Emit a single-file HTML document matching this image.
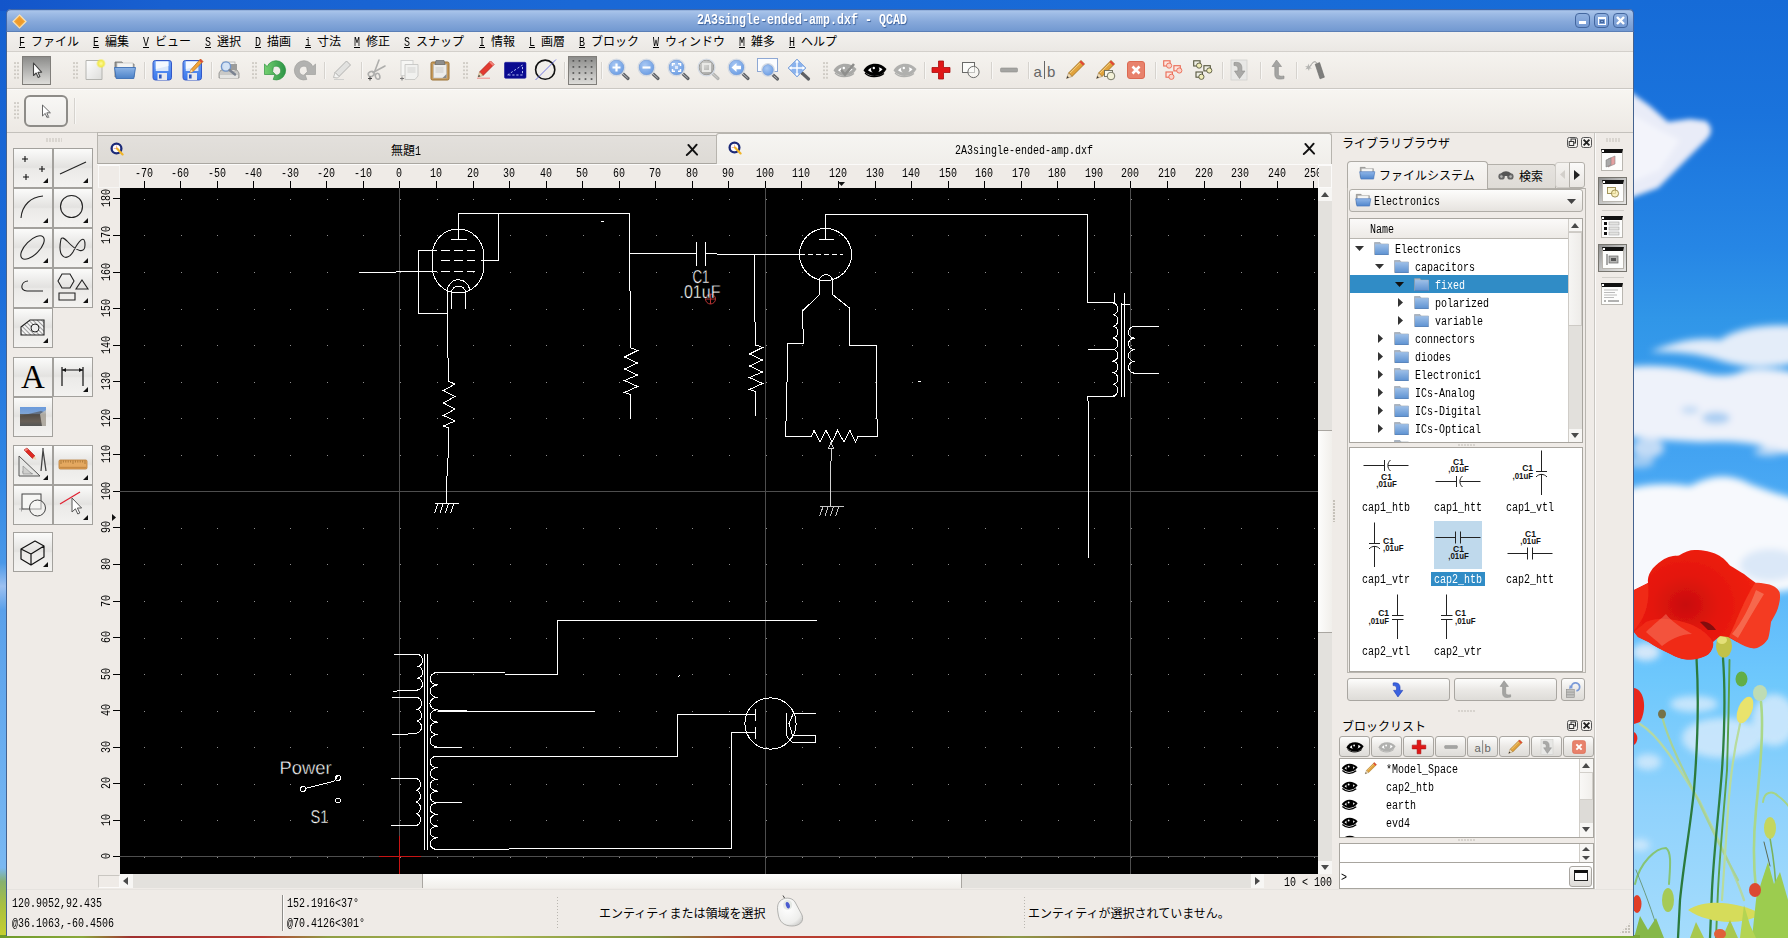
<!DOCTYPE html>
<html lang="ja"><head><meta charset="utf-8"><title>2A3single-ended-amp.dxf - QCAD</title>
<style>
html,body{margin:0;padding:0;}
body{width:1788px;height:938px;overflow:hidden;background:#1f74dc;position:relative;
 font-family:"Liberation Mono","Noto Sans CJK JP",monospace;font-size:12px;color:#000;}
div{position:absolute;box-sizing:border-box;}
svg{position:absolute;overflow:visible;}
.t{white-space:pre;line-height:16px;height:16px;font-size:12px;}
.l{display:inline-block;transform:scaleX(.8333);transform-origin:0 50%;white-space:pre;}
.win{background:#efebe7;}
.tb{background:linear-gradient(#fafafa,#e4e2df 55%,#d6d4d0);border:1px solid #9e9c98;}
.btn{background:linear-gradient(#fdfdfc,#ebe9e6 50%,#dedcd8);border:1px solid #a9a6a1;border-radius:3px;}
.sunk{background:#fff;border:1px solid #a8a59f;}
.sep{background:#cfccc7;width:1px;}
.grip{background-image:radial-gradient(circle at 1px 1px,#c6c2bb 0.55px,transparent 1.1px);background-size:3px 3px;}
.sbt{background:#e4e2de;}
.sbh{background:linear-gradient(#f7f6f4,#eceae6);border:1px solid #c9c6c1;}
u{text-decoration:none;border-bottom:1px solid #000;}
</style></head>
<body>

<svg width="1788" height="938" viewBox="0 0 1788 938" style="left:0;top:0">
<defs>
<linearGradient id="sky" x1="0" y1="0" x2="0" y2="1">
<stop offset="0" stop-color="#166bd7"/><stop offset="0.12" stop-color="#1a73dc"/>
<stop offset="0.264" stop-color="#2686e5"/><stop offset="0.34" stop-color="#3096e8"/><stop offset="0.49" stop-color="#44a4f2"/>
<stop offset="0.6" stop-color="#58b4f7"/><stop offset="0.69" stop-color="#68c2fc"/><stop offset="0.725" stop-color="#6ec8fc"/>
<stop offset="0.86" stop-color="#90d2fc"/><stop offset="1" stop-color="#a4dcfc"/>
</linearGradient>
<linearGradient id="skyL" x1="0" y1="0" x2="0" y2="1">
<stop offset="0" stop-color="#1560d0"/><stop offset="0.3" stop-color="#1b6cd9"/><stop offset="0.5" stop-color="#2f86e4"/>
<stop offset="0.6" stop-color="#4a98e8"/><stop offset="0.625" stop-color="#9cc0f0"/><stop offset="0.65" stop-color="#5aa0ea"/>
<stop offset="0.8" stop-color="#6aaef0"/><stop offset="0.925" stop-color="#7ab8f2"/><stop offset="0.94" stop-color="#86b070"/>
<stop offset="0.965" stop-color="#a8c040"/><stop offset="1" stop-color="#c8d030"/>
</linearGradient>
<linearGradient id="bot" x1="0" y1="0" x2="1" y2="0">
<stop offset="0" stop-color="#6d9a2a"/><stop offset="0.05" stop-color="#8aa83a"/><stop offset="0.08" stop-color="#a03030"/>
<stop offset="0.16" stop-color="#b83a34"/><stop offset="0.2" stop-color="#8f9e44"/><stop offset="0.3" stop-color="#a9b552"/>
<stop offset="0.4" stop-color="#7f9440"/><stop offset="0.45" stop-color="#b14030"/><stop offset="0.55" stop-color="#c03a30"/>
<stop offset="0.62" stop-color="#8c9a48"/><stop offset="0.7" stop-color="#a44a3a"/><stop offset="0.8" stop-color="#b04436"/>
<stop offset="0.88" stop-color="#8aa040"/><stop offset="1" stop-color="#7aa838"/>
</linearGradient>
<filter id="bl6" x="-30%" y="-30%" width="160%" height="160%"><feGaussianBlur stdDeviation="3.5"/></filter>
<filter id="bl3" x="-30%" y="-30%" width="160%" height="160%"><feGaussianBlur stdDeviation="2.5"/></filter>
<filter id="bl1" x="-30%" y="-30%" width="160%" height="160%"><feGaussianBlur stdDeviation="0.7"/></filter>
<radialGradient id="pop" cx="0.42" cy="0.5" r="0.6">
<stop offset="0" stop-color="#c80e0a"/><stop offset="0.45" stop-color="#e4150e"/><stop offset="1" stop-color="#f0210f"/>
</radialGradient>
<linearGradient id="skyT" x1="0" y1="0" x2="1" y2="0"><stop offset="0" stop-color="#1355ca"/><stop offset="0.1" stop-color="#1860d0"/><stop offset="0.35" stop-color="#1a68d6"/><stop offset="1" stop-color="#176cd7"/></linearGradient>
<clipPath id="deskclip"><path d="M0 0 H1788 V938 H0Z"/></clipPath>
</defs>
<rect x="0" y="0" width="1788" height="938" fill="url(#sky)"/>
<rect x="0" y="0" width="8" height="938" fill="url(#skyL)"/>
<rect x="0" y="0" width="1640" height="11" fill="url(#skyT)"/>
<!-- clouds -->
<g filter="url(#bl3)">
<path d="M1625 88 L1650 106 L1668 122 L1690 119 L1706 121 Q1716 130 1706 140 L1694 152 L1678 168 L1658 188 L1625 200Z" fill="#e9ecf8"/>
<path d="M1625 110 L1660 130 L1680 140 L1660 170 L1625 185Z" fill="#f3f4fb"/>
</g>
<g filter="url(#bl6)">
<path d="M1650 352 Q1690 335 1720 340 Q1745 322 1800 326 V362 Q1760 372 1725 362 Q1690 350 1650 352Z" fill="#e4edf9"/>
<path d="M1620 368 Q1660 362 1700 372 Q1725 380 1745 370 Q1770 366 1800 374 V452 Q1772 456 1762 446 Q1740 440 1700 442 Q1660 440 1620 436Z" fill="#eef2fa"/>
<ellipse cx="1716" cy="418" rx="14" ry="6" fill="#a9cdf2"/>
<ellipse cx="1690" cy="410" rx="9" ry="4" fill="#c3daf5"/>
<ellipse cx="1648" cy="448" rx="16" ry="10" fill="#c2dbf6"/>
<path d="M1620 492 Q1650 480 1690 486 Q1722 468 1750 484 Q1775 494 1800 500 V588 Q1760 598 1720 590 Q1670 602 1620 598Z" fill="#f7f9fd"/>
<ellipse cx="1770" cy="565" rx="30" ry="16" fill="#dbe8f8"/>
<ellipse cx="1640" cy="462" rx="14" ry="6" fill="#9fcbf3"/>
<ellipse cx="1768" cy="452" rx="14" ry="4" fill="#b9d8f6"/>
</g>
<g filter="url(#bl6)" fill="#d4eafc" opacity="0.85">
<ellipse cx="1722" cy="738" rx="40" ry="20"/>
<ellipse cx="1694" cy="704" rx="24" ry="8"/>
<ellipse cx="1774" cy="720" rx="22" ry="26"/>
<ellipse cx="1646" cy="652" rx="14" ry="9" fill="#e6eef9"/>
<ellipse cx="1648" cy="762" rx="13" ry="8"/>
<ellipse cx="1640" cy="845" rx="10" ry="6"/>
</g>
<!-- stems -->
<g fill="none" stroke-linecap="round" filter="url(#bl1)">
<path d="M1640 724 C1660 736 1680 770 1700 802 C1716 836 1734 870 1744 900" stroke="#b4d8a4" stroke-width="2.4"/>
<path d="M1662.5 718 C1668 740 1684 772 1698 800 C1712 830 1726 858 1738 880" stroke="#a8d296" stroke-width="2.2"/>
<path d="M1740 724 C1734 750 1730 780 1728 810 C1726 840 1724 870 1722 900" stroke="#b8dc9c" stroke-width="2.2"/>
<path d="M1761 702 C1764 730 1760 770 1756 810 C1752 850 1754 890 1762 925" stroke="#aad88a" stroke-width="2.6"/>
<path d="M1763 802 C1764 792 1772 790 1778 796 C1784 800 1787 804 1790 808" stroke="#a6d486" stroke-width="2"/>
<path d="M1770 838 C1774 860 1776 878 1776 896" stroke="#7ab25a" stroke-width="1.5"/>
<path d="M1696.5 658 C1699 700 1698 740 1694 790 C1690 830 1684 860 1680 900 L1678 938" stroke="#2c7a3c" stroke-width="2.3"/>
<path d="M1723 658 C1726 700 1724 740 1722 770 C1719 810 1714 850 1712 890 L1710 938" stroke="#2f8040" stroke-width="2.3"/>
<path d="M1729.5 660 C1729 700 1728 740 1727 770 C1724 810 1720 850 1718 890 L1716 938" stroke="#58a048" stroke-width="1.9"/>
<path d="M1635 884 C1640 862 1656 848 1666 848 C1672 852 1670 868 1669 884" stroke="#86c474" stroke-width="2"/>
<path d="M1636 870 C1644 890 1652 910 1660 938" stroke="#6a9a80" stroke-width="1"/>
<path d="M1764 842 L1770 866" stroke="#5a6a50" stroke-width="1"/>
</g>
<!-- buds etc -->
<g filter="url(#bl1)">
<ellipse cx="1724" cy="646" rx="8" ry="11.5" fill="#c2c24a"/>
<ellipse cx="1722" cy="640" rx="5" ry="4" fill="#e4e078"/>
<ellipse cx="1741.5" cy="679" rx="6" ry="7.5" fill="#62ae46"/>
<ellipse cx="1745" cy="710" rx="7" ry="14" fill="#e9e36c" transform="rotate(22 1745 710)"/>
<ellipse cx="1760" cy="693" rx="7" ry="8" fill="#bedcb4"/>
<ellipse cx="1662" cy="714" rx="4" ry="4.5" fill="#74724a"/>
<ellipse cx="1770" cy="828" rx="6" ry="11" fill="#c4d65e"/>
<ellipse cx="1668" cy="900" rx="6" ry="12" fill="#a6ca56"/>
<path d="M1688 910 C1706 898 1738 902 1762 914 C1742 926 1708 924 1688 910Z" fill="#d6dc5a"/>
<path d="M1752 938 L1756 900 L1762 880 L1768 862 L1774 884 L1780 872 L1788 900 V938Z" fill="#9ccc50"/>
<path d="M1740 938 L1744 905 L1750 925 L1756 938Z" fill="#b4d452"/>
<path d="M1634 938 L1640 916 L1648 930 L1656 918 L1664 938Z" fill="#86b84a"/>
<path d="M1690 938 L1696 922 L1704 938Z M1722 938 L1730 920 L1738 938Z" fill="#a8c850"/>
<ellipse cx="1755" cy="890" rx="6" ry="7" fill="#dc4a30"/>
<ellipse cx="1637" cy="904" rx="4.5" ry="9" fill="#e03c26"/>
<ellipse cx="1720" cy="934" rx="6" ry="5" fill="#e0603a"/>
<path d="M1634 688 C1645 690 1647 710 1640 722 L1634 724Z" fill="#e8261a"/>
<path d="M1634 732 C1639 735 1638 742 1634 745Z" fill="#e8261a"/>
</g>
<!-- poppy -->
<g filter="url(#bl1)">
<path d="M1634 590 L1648 583 C1647 575 1652 567 1662 560.5 C1668 556 1674 556 1679 555.5 C1684 552 1690 550 1694.5 550 C1704 550 1712 552 1717 554.5 C1724 558 1727 562 1730 565.5 C1736 569 1740 572 1744 574 C1749 578 1752 580 1756 583 L1757 640 L1737 642 L1728 637 L1720 636 L1713 642 C1713 648 1711 652 1708 654.5 C1702 658 1694 660 1688 659.5 C1680 659 1674 656 1670.5 654 C1662 650 1654 646 1648.5 642 L1638 637 L1634 632Z" fill="url(#pop)"/>
<path d="M1755 583 C1760 582 1765 584 1769.5 584.5 C1775 586 1778 589 1779.5 592 C1781 598 1779 604 1778 608 C1776 614 1773 618 1771 622 C1770 630 1769 636 1768 639 C1764 645 1759 648 1754 648.5 C1748 648 1742 645 1737 642 C1734 640 1731 638 1729 637 C1736 622 1744 600 1755 583Z" fill="#f43a20"/>
<path d="M1634 632 L1638 637 L1648.5 642 C1654 646 1662 650 1670.5 654 C1676 657 1682 660 1688 659.5 C1696 659.5 1703 658 1708 654.5 C1712 651 1714 646 1713 642 C1708 634 1700 628 1690 624 C1676 619 1660 616 1646 622 Z" fill="#f02a18"/>
<path d="M1646 632 C1654 624 1662 618 1666 614 C1672 622 1682 628 1692 634 C1680 634 1670 640 1662 646 C1656 640 1650 636 1646 632Z" fill="#f7866c" opacity="0.45"/>
<path d="M1756 590 C1750 606 1742 622 1732 634 L1738 638 C1746 624 1754 610 1764 594Z" fill="#f8957c" opacity="0.5"/>
<path d="M1700 622 C1706 620 1712 624 1716 630 L1708 630Z" fill="#5a0806" opacity="0.7"/>
<path d="M1634 590 L1648 583 C1650 600 1646 616 1636 628 L1634 630Z" fill="#f02a18"/>
</g>
<rect x="0" y="935" width="1640" height="3" fill="url(#bot)"/>
</svg>
<div style="left:6px;top:9px;width:1628px;height:927px;background:#efebe7;border:1px solid #44628f;border-top:none;border-radius:5px 5px 0 0;"></div><div style="left:6px;top:9px;width:1628px;height:23px;background:linear-gradient(#7f9fd0 0,#a9c4ea 1px,#9dbbe5 4px,#86a8da 12px,#7299d1 21px,#5f86c2 22px);border-radius:5px 5px 0 0;border:1px solid #3f66a8;border-bottom:1px solid #5b7fb6;"></div><svg width="15" height="15" viewBox="0 0 16 16" style="left:11.5px;top:13.5px"><path d="M8 1 L15 8 L8 15 L1 8Z" fill="#f3a93c" stroke="#fbe3b5" stroke-width="1.2"/><path d="M8 3.5 L12.5 8 L8 12.5 L3.5 8Z" fill="#ee9a2a"/></svg><div class="t" style="left:697px;top:11px;font-size:14px;line-height:18px;height:18px;font-weight:bold;color:#fff;text-shadow:1px 1px 1px #3a5f9a;"><span class="l" style="margin-right:-42.00px">2A3single-ended-amp.dxf - QCAD</span></div><div style="left:1575px;top:13px;width:15px;height:15px;border:1px solid #44679f;border-radius:4px;background:linear-gradient(#8fb0df,#7499d2);"></div><div style="left:1579px;top:21px;width:7px;height:3px;background:#fff;"></div><div style="left:1594px;top:13px;width:15px;height:15px;border:1px solid #44679f;border-radius:4px;background:linear-gradient(#8fb0df,#7499d2);"></div><div style="left:1598px;top:17px;width:8px;height:8px;border:1px solid #fff;border-top:2px solid #fff;"></div><div style="left:1600px;top:20px;width:4px;height:3px;border:1px solid #44679f;"></div><div style="left:1613px;top:13px;width:15px;height:15px;border:1px solid #44679f;border-radius:4px;background:linear-gradient(#8fb0df,#7499d2);"></div><svg width="9" height="9" viewBox="0 0 9 9" style="left:1616px;top:16px"><path d="M1 1 L8 8 M8 1 L1 8" stroke="#fff" stroke-width="2.4"/></svg><div style="left:7px;top:32px;width:1626px;height:20px;background:linear-gradient(#f3f1ee,#ebe8e4);border-bottom:1px solid #d3d0cb;"></div><div class="t" style="left:19px;top:35px"><span class="l" style="margin-right:-2.4px"><span style="text-decoration:underline">F</span> </span>ファイル</div><div class="t" style="left:93px;top:35px"><span class="l" style="margin-right:-2.4px"><span style="text-decoration:underline">E</span> </span>編集</div><div class="t" style="left:143px;top:35px"><span class="l" style="margin-right:-2.4px"><span style="text-decoration:underline">V</span> </span>ビュー</div><div class="t" style="left:205px;top:35px"><span class="l" style="margin-right:-2.4px"><span style="text-decoration:underline">S</span> </span>選択</div><div class="t" style="left:255px;top:35px"><span class="l" style="margin-right:-2.4px"><span style="text-decoration:underline">D</span> </span>描画</div><div class="t" style="left:305px;top:35px"><span class="l" style="margin-right:-2.4px"><span style="text-decoration:underline">i</span> </span>寸法</div><div class="t" style="left:354px;top:35px"><span class="l" style="margin-right:-2.4px"><span style="text-decoration:underline">M</span> </span>修正</div><div class="t" style="left:404px;top:35px"><span class="l" style="margin-right:-2.4px"><span style="text-decoration:underline">S</span> </span>スナップ</div><div class="t" style="left:479px;top:35px"><span class="l" style="margin-right:-2.4px"><span style="text-decoration:underline">I</span> </span>情報</div><div class="t" style="left:529px;top:35px"><span class="l" style="margin-right:-2.4px"><span style="text-decoration:underline">L</span> </span>画層</div><div class="t" style="left:579px;top:35px"><span class="l" style="margin-right:-2.4px"><span style="text-decoration:underline">B</span> </span>ブロック</div><div class="t" style="left:653px;top:35px"><span class="l" style="margin-right:-2.4px"><span style="text-decoration:underline">W</span> </span>ウィンドウ</div><div class="t" style="left:739px;top:35px"><span class="l" style="margin-right:-2.4px"><span style="text-decoration:underline">M</span> </span>雑多</div><div class="t" style="left:789px;top:35px"><span class="l" style="margin-right:-2.4px"><span style="text-decoration:underline">H</span> </span>ヘルプ</div><div style="left:7px;top:52px;width:1626px;height:37px;background:linear-gradient(#f5f3ef,#ece8e3);border-bottom:1px solid #cbc8c3;"></div><div style="left:7px;top:89px;width:1626px;height:44px;background:linear-gradient(#f7f5f1,#ede9e4);border-top:1px solid #fbfaf9;border-bottom:1px solid #c4c1bc;"></div><div class="grip" style="left:14px;top:62px;width:5px;height:17px;background-size:3px 3.7px;"></div><div class="grip" style="left:73px;top:62px;width:5px;height:17px;background-size:3px 3.7px;"></div><div class="grip" style="left:252px;top:62px;width:5px;height:17px;background-size:3px 3.7px;"></div><div class="grip" style="left:463px;top:62px;width:5px;height:17px;background-size:3px 3.7px;"></div><div class="grip" style="left:823px;top:62px;width:5px;height:17px;background-size:3px 3.7px;"></div><div class="grip" style="left:14px;top:101.5px;width:5px;height:18px;background-size:3px 3.7px;"></div><div style="left:144px;top:62px;width:1px;height:17px;background:#d6d3ce;"></div><div style="left:145px;top:62px;width:1px;height:17px;background:#f8f7f5;"></div><div style="left:211px;top:62px;width:1px;height:17px;background:#d6d3ce;"></div><div style="left:212px;top:62px;width:1px;height:17px;background:#f8f7f5;"></div><div style="left:324px;top:62px;width:1px;height:17px;background:#d6d3ce;"></div><div style="left:325px;top:62px;width:1px;height:17px;background:#f8f7f5;"></div><div style="left:361px;top:62px;width:1px;height:17px;background:#d6d3ce;"></div><div style="left:362px;top:62px;width:1px;height:17px;background:#f8f7f5;"></div><div style="left:564px;top:62px;width:1px;height:17px;background:#d6d3ce;"></div><div style="left:565px;top:62px;width:1px;height:17px;background:#f8f7f5;"></div><div style="left:601px;top:62px;width:1px;height:17px;background:#d6d3ce;"></div><div style="left:602px;top:62px;width:1px;height:17px;background:#f8f7f5;"></div><div style="left:924px;top:62px;width:1px;height:17px;background:#d6d3ce;"></div><div style="left:925px;top:62px;width:1px;height:17px;background:#f8f7f5;"></div><div style="left:991px;top:62px;width:1px;height:17px;background:#d6d3ce;"></div><div style="left:992px;top:62px;width:1px;height:17px;background:#f8f7f5;"></div><div style="left:1028px;top:62px;width:1px;height:17px;background:#d6d3ce;"></div><div style="left:1029px;top:62px;width:1px;height:17px;background:#f8f7f5;"></div><div style="left:1155px;top:62px;width:1px;height:17px;background:#d6d3ce;"></div><div style="left:1156px;top:62px;width:1px;height:17px;background:#f8f7f5;"></div><div style="left:1222px;top:62px;width:1px;height:17px;background:#d6d3ce;"></div><div style="left:1223px;top:62px;width:1px;height:17px;background:#f8f7f5;"></div><div style="left:1260px;top:62px;width:1px;height:17px;background:#d6d3ce;"></div><div style="left:1261px;top:62px;width:1px;height:17px;background:#f8f7f5;"></div><div style="left:1296px;top:62px;width:1px;height:17px;background:#d6d3ce;"></div><div style="left:1297px;top:62px;width:1px;height:17px;background:#f8f7f5;"></div><div style="left:74px;top:98px;width:1px;height:26px;background:#d6d3ce;"></div><div style="left:75px;top:98px;width:1px;height:26px;background:#f8f7f5;"></div><div style="left:22px;top:56px;width:29px;height:29px;background:linear-gradient(#8c8c8a,#b0b0ae 45%,#dddcd9);border:1px solid #807e7a;"></div><div style="left:568px;top:56px;width:29px;height:29px;background:linear-gradient(#8c8c8a,#b0b0ae 45%,#dddcd9);border:1px solid #807e7a;"></div><div style="left:24px;top:95px;width:44px;height:32px;background:linear-gradient(#f8f7f5,#efedea);border:2px solid #8e8c88;border-radius:6px;"></div><svg width="24" height="24" viewBox="0 0 24 24" style="left:34px;top:99px;"><path d="M8.5 6 L8.5 17 L11.2 14.4 L13 18.6 L14.6 17.9 L12.8 13.8 L16.4 13.8 Z" fill="#fff" stroke="#666" stroke-width="1" stroke-linejoin="round"/><rect x="13.2" y="17" width="2" height="2" fill="#999" transform="rotate(-25 14 18)"/></svg><svg width="24" height="24" viewBox="0 0 24 24" style="left:24.5px;top:58px;"><path d="M8.5 5 L8.5 17.5 L11.2 15 L13.2 19.4 L14.9 18.6 L13 14.4 L16.6 14.2 Z" fill="#fff" stroke="#444" stroke-width="1.1" stroke-linejoin="round"/></svg><svg width="24" height="24" viewBox="0 0 24 24" style="left:83px;top:58px;"><defs><linearGradient id="gnew" x1="0" y1="0" x2="1" y2="1"><stop offset="0" stop-color="#ffffff"/><stop offset="1" stop-color="#dcdcda"/></linearGradient><radialGradient id="gsun"><stop offset="0" stop-color="#fff9a0"/><stop offset="0.6" stop-color="#f2ea4c"/><stop offset="1" stop-color="#f2ea4c" stop-opacity="0"/></radialGradient></defs><path d="M3 2.5 H19 V21.5 H3Z" fill="url(#gnew)" stroke="#b4b4b0" stroke-width="1"/><circle cx="18" cy="5.5" r="5" fill="url(#gsun)"/></svg><svg width="24" height="24" viewBox="0 0 24 24" style="left:112.5px;top:58px;"><defs><linearGradient id="gfol" x1="0" y1="0" x2="0" y2="1"><stop offset="0" stop-color="#8db4e6"/><stop offset="1" stop-color="#4c82c8"/></linearGradient></defs><path d="M2 4 H9 L10.5 6 H21 V19 H2Z" fill="#9a9a98" stroke="#6e6e6c" stroke-width="0.8"/><path d="M4 5 H20 V14 H4Z" fill="#f4f4f2" stroke="#bdbdbb" stroke-width="0.6"/><path d="M1.5 9.5 H22.5 L20.8 20.5 H3.2Z" fill="url(#gfol)" stroke="#3d6fb4" stroke-width="0.9" stroke-linejoin="round"/></svg><svg width="24" height="24" viewBox="0 0 24 24" style="left:149.5px;top:58px;"><defs><linearGradient id="gflo" x1="0" y1="0" x2="0" y2="1"><stop offset="0" stop-color="#6a9ef4"/><stop offset="1" stop-color="#3a78ec"/></linearGradient></defs><rect x="3" y="2.5" width="18.5" height="19.5" rx="2.4" fill="url(#gflo)" stroke="#3458c8" stroke-width="1"/><rect x="5.8" y="3.5" width="12.6" height="9.5" fill="#dbe8fb"/><path d="M5.8 3.5 H18.4 V8 L5.8 11Z" fill="#f4f8fe"/><rect x="7.5" y="15" width="9.5" height="7" fill="#e6e8ee"/><rect x="9" y="16.5" width="2.6" height="4" fill="#2e58c0"/></svg><svg width="24" height="24" viewBox="0 0 24 24" style="left:180px;top:58px;"><defs><linearGradient id="gflo2" x1="0" y1="0" x2="0" y2="1"><stop offset="0" stop-color="#6a9ef4"/><stop offset="1" stop-color="#3a78ec"/></linearGradient></defs><rect x="3" y="2.5" width="18.5" height="19.5" rx="2.4" fill="url(#gflo2)" stroke="#3458c8" stroke-width="1"/><rect x="5.8" y="3.5" width="12.6" height="9.5" fill="#dbe8fb"/><path d="M5.8 3.5 H18.4 V8 L5.8 11Z" fill="#f4f8fe"/><rect x="7.5" y="15" width="9.5" height="7" fill="#e6e8ee"/><rect x="9" y="16.5" width="2.6" height="4" fill="#2e58c0"/><path d="M20.5 1 L23 3.5 L13 13.5 L10 14.5 L11 11.5Z" fill="#f0a438" stroke="#b86a10" stroke-width="0.7"/><path d="M20.5 1 L23 3.5 L21.6 4.9 L19.1 2.4Z" fill="#d84a3a"/><path d="M10 14.5 L11 11.5 L13 13.5Z" fill="#f6deb0"/></svg><svg width="24" height="24" viewBox="0 0 24 24" style="left:217px;top:58px;"><path d="M4 12 H20 L22 15 V20 H2 V15Z" fill="#c9c9c7" stroke="#8e8e8c" stroke-width="0.8"/><rect x="6" y="4" width="12" height="9" fill="#f2f2f0" stroke="#a9a9a7" stroke-width="0.7"/><rect x="3" y="17" width="18" height="3" fill="#e4e4e2"/><rect x="13" y="6" width="7" height="6" fill="#9c9c9a"/><circle cx="9" cy="8.5" r="4.6" fill="#cfe0f6" fill-opacity="0.85" stroke="#6f95cc" stroke-width="1.4"/><path d="M12.5 12 L18 16.5" stroke="#7a8290" stroke-width="2.4" stroke-linecap="round"/></svg><svg width="24" height="24" viewBox="0 0 24 24" style="left:262.5px;top:58px;"><defs><linearGradient id="gun" x1="0" y1="0" x2="1" y2="0"><stop offset="0" stop-color="#74d070"/><stop offset="1" stop-color="#2c9446"/></linearGradient></defs><path d="M1.5 6 L4.2 8.6 A9.6 9.6 0 1 1 10.2 21.5 L11.8 17 A4.5 4.5 0 1 0 10.3 9.3 L9.6 13.7 L12.5 16.5 L1.5 16.5Z" fill="url(#gun)" stroke="#2f9440" stroke-width="0.7" stroke-linejoin="round"/></svg><svg width="24" height="24" viewBox="0 0 24 24" style="left:293px;top:58px;"><g transform="translate(24,0) scale(-1,1)"><path d="M1.5 6 L4.2 8.6 A9.6 9.6 0 1 1 10.2 21.5 L11.8 17 A4.5 4.5 0 1 0 10.3 9.3 L9.6 13.7 L12.5 16.5 L1.5 16.5Z" fill="#b2b2b0" stroke="#a0a09e" stroke-width="0.7" stroke-linejoin="round"/></g></svg><svg width="24" height="24" viewBox="0 0 24 24" style="left:330px;top:58px;"><path d="M16.5 3 L20.5 7 L9 18.5 L5 14.5Z" fill="#e2e2e0" stroke="#b2b2b0" stroke-width="1"/><path d="M5 14.5 L9 18.5 L7.5 20 L3.5 19.5Z" fill="#f4f4f2" stroke="#b2b2b0" stroke-width="0.8"/><path d="M4 21.5 H14" stroke="#d0d0ce" stroke-width="1"/></svg><svg width="24" height="24" viewBox="0 0 24 24" style="left:365px;top:58px;"><g fill="none" stroke="#aeaeac" stroke-width="1.6" stroke-linecap="round"><path d="M14 2 L9.5 14"/><path d="M20 8 L8 14.5"/><ellipse cx="6.2" cy="16" rx="3" ry="2.4" transform="rotate(-25 6.2 16)"/><ellipse cx="12.6" cy="18.3" rx="2.2" ry="3" transform="rotate(-15 12.6 18.3)"/></g><path d="M3 20.5 H7 M5 18.5 V22.5" stroke="#444" stroke-width="1"/></svg><svg width="24" height="24" viewBox="0 0 24 24" style="left:397px;top:58px;"><rect x="4" y="2.5" width="12" height="15" fill="#f6f6f4" stroke="#cfcfcd" stroke-width="0.9"/><path d="M8 6.5 H21 V18 L18 21.5 H8Z" fill="#f1f1ef" stroke="#c6c6c4" stroke-width="0.9"/><rect x="10.5" y="9" width="8" height="6" fill="#e2e2e0"/><path d="M3 20.5 H7 M5 18.5 V22.5" stroke="#777" stroke-width="1"/></svg><svg width="24" height="24" viewBox="0 0 24 24" style="left:427.5px;top:58px;"><rect x="3" y="4" width="18" height="18" rx="1.5" fill="#c69a5a" stroke="#9a7236" stroke-width="1"/><rect x="5.5" y="6.5" width="13" height="13.5" fill="#ececea" stroke="#b9b9b7" stroke-width="0.6"/><path d="M8 2.5 H16 L17 6.5 H7Z" fill="#8e8e8c" stroke="#6a6a68" stroke-width="0.7"/><path d="M18.5 16 V20 H14.5Z" fill="#8a8a88"/><rect x="7.5" y="9" width="8" height="6" fill="#dcdcda"/></svg><svg width="24" height="24" viewBox="0 0 24 24" style="left:473px;top:58px;"><path d="M17.5 3 L21 6.5 L10 17.5 L6.5 14Z" fill="#e23a30" stroke="#b0201a" stroke-width="0.8"/><path d="M6.5 14 L10 17.5 L5 19Z" fill="#f2d9b4" stroke="#a88a5a" stroke-width="0.5"/><path d="M5 19 L6 16.8 L7.3 18.2Z" fill="#333"/><path d="M17.5 3 L21 6.5 L19.7 7.8 L16.2 4.3Z" fill="#f48a80"/><path d="M4 20.2 H17" stroke="#f08a84" stroke-width="1"/></svg><svg width="24" height="24" viewBox="0 0 24 24" style="left:502.5px;top:58px;"><rect x="1.5" y="4.3" width="21.5" height="16" rx="1.2" fill="#0a0a90" stroke="#1a1a9a" stroke-width="0.6"/><path d="M4.5 17 L19.5 7 V17 Z" fill="none" stroke="#b4c0f4" stroke-width="1" stroke-dasharray="2.2 1.8"/></svg><svg width="24" height="24" viewBox="0 0 24 24" style="left:533px;top:58px;"><circle cx="12.2" cy="11.7" r="9.6" fill="none" stroke="#111" stroke-width="1.6"/><path d="M2.5 22 L23 1.5" stroke="#5058dc" stroke-width="0.8"/></svg><svg width="24" height="24" viewBox="0 0 24 24" style="left:570.5px;top:58px;"><rect x="1.5" y="2" width="1.7" height="1.7" fill="#555"/><rect x="1.5" y="8.07" width="1.7" height="1.7" fill="#555"/><rect x="1.5" y="14.14" width="1.7" height="1.7" fill="#555"/><rect x="1.5" y="20.21" width="1.7" height="1.7" fill="#555"/><rect x="7.57" y="2" width="1.7" height="1.7" fill="#555"/><rect x="7.57" y="8.07" width="1.7" height="1.7" fill="#555"/><rect x="7.57" y="14.14" width="1.7" height="1.7" fill="#555"/><rect x="7.57" y="20.21" width="1.7" height="1.7" fill="#555"/><rect x="13.64" y="2" width="1.7" height="1.7" fill="#555"/><rect x="13.64" y="8.07" width="1.7" height="1.7" fill="#555"/><rect x="13.64" y="14.14" width="1.7" height="1.7" fill="#555"/><rect x="13.64" y="20.21" width="1.7" height="1.7" fill="#555"/><rect x="19.71" y="2" width="1.7" height="1.7" fill="#555"/><rect x="19.71" y="8.07" width="1.7" height="1.7" fill="#555"/><rect x="19.71" y="14.14" width="1.7" height="1.7" fill="#555"/><rect x="19.71" y="20.21" width="1.7" height="1.7" fill="#555"/></svg><svg width="24" height="24" viewBox="0 0 24 24" style="left:607px;top:58px;"><defs><radialGradient id="gz53526" cx="0.4" cy="0.35" r="0.75"><stop offset="0" stop-color="#a9c8f3"/><stop offset="1" stop-color="#6498e2"/></radialGradient></defs><path d="M14.5 14.5 L21 20.5" stroke="#5e6064" stroke-width="3.2" stroke-linecap="round"/><path d="M16 16 L20.5 20" stroke="#b8bcc2" stroke-width="1" stroke-linecap="round"/><circle cx="9.5" cy="9.5" r="7.6" fill="url(#gz53526)" stroke="#7fa2d8" stroke-width="1"/><circle cx="9.5" cy="9.5" r="8.4" fill="none" stroke="#d5dbe4" stroke-width="1.3"/><path d="M5.5 9.5 H13.5 M9.5 5.5 V13.5" stroke="#fff" stroke-width="2.2"/></svg><svg width="24" height="24" viewBox="0 0 24 24" style="left:637px;top:58px;"><defs><radialGradient id="gz47447" cx="0.4" cy="0.35" r="0.75"><stop offset="0" stop-color="#a9c8f3"/><stop offset="1" stop-color="#6498e2"/></radialGradient></defs><path d="M14.5 14.5 L21 20.5" stroke="#5e6064" stroke-width="3.2" stroke-linecap="round"/><path d="M16 16 L20.5 20" stroke="#b8bcc2" stroke-width="1" stroke-linecap="round"/><circle cx="9.5" cy="9.5" r="7.6" fill="url(#gz47447)" stroke="#7fa2d8" stroke-width="1"/><circle cx="9.5" cy="9.5" r="8.4" fill="none" stroke="#d5dbe4" stroke-width="1.3"/><path d="M5.5 9.5 H13.5" stroke="#fff" stroke-width="2.2"/></svg><svg width="24" height="24" viewBox="0 0 24 24" style="left:667px;top:58px;"><defs><radialGradient id="gz53570" cx="0.4" cy="0.35" r="0.75"><stop offset="0" stop-color="#a9c8f3"/><stop offset="1" stop-color="#6498e2"/></radialGradient></defs><path d="M14.5 14.5 L21 20.5" stroke="#5e6064" stroke-width="3.2" stroke-linecap="round"/><path d="M16 16 L20.5 20" stroke="#b8bcc2" stroke-width="1" stroke-linecap="round"/><circle cx="9.5" cy="9.5" r="7.6" fill="url(#gz53570)" stroke="#7fa2d8" stroke-width="1"/><circle cx="9.5" cy="9.5" r="8.4" fill="none" stroke="#d5dbe4" stroke-width="1.3"/><path d="M5.5 8 V5.8 H8 M11 5.8 H13.5 V8 M13.5 11 V13.2 H11 M8 13.2 H5.5 V11" stroke="#fff" stroke-width="1.5" fill="none"/><rect x="8" y="8" width="3" height="3" fill="#dce8fa"/></svg><svg width="24" height="24" viewBox="0 0 24 24" style="left:697px;top:58px;"><defs><radialGradient id="gz81569g" cx="0.4" cy="0.35" r="0.75"><stop offset="0" stop-color="#d4d4d2"/><stop offset="1" stop-color="#a2a2a0"/></radialGradient></defs><path d="M14.5 14.5 L21 20.5" stroke="#b4b4b2" stroke-width="3.2" stroke-linecap="round"/><path d="M16 16 L20.5 20" stroke="#d0d0ce" stroke-width="1" stroke-linecap="round"/><circle cx="9.5" cy="9.5" r="7.6" fill="url(#gz81569g)" stroke="#8e8e8c" stroke-width="1"/><circle cx="9.5" cy="9.5" r="8.4" fill="none" stroke="#d5dbe4" stroke-width="1.3"/><rect x="6" y="6" width="7" height="7" fill="none" stroke="#e8e8e6" stroke-width="2"/></svg><svg width="24" height="24" viewBox="0 0 24 24" style="left:727px;top:58px;"><defs><radialGradient id="gz6534" cx="0.4" cy="0.35" r="0.75"><stop offset="0" stop-color="#a9c8f3"/><stop offset="1" stop-color="#6498e2"/></radialGradient></defs><path d="M14.5 14.5 L21 20.5" stroke="#5e6064" stroke-width="3.2" stroke-linecap="round"/><path d="M16 16 L20.5 20" stroke="#b8bcc2" stroke-width="1" stroke-linecap="round"/><circle cx="9.5" cy="9.5" r="7.6" fill="url(#gz6534)" stroke="#7fa2d8" stroke-width="1"/><circle cx="9.5" cy="9.5" r="8.4" fill="none" stroke="#d5dbe4" stroke-width="1.3"/><path d="M4.5 9.5 L9.5 5 V7.8 H14 V11.2 H9.5 V14 Z" fill="#fff"/></svg><svg width="24" height="24" viewBox="0 0 24 24" style="left:756px;top:58px;"><rect x="1.5" y="0.5" width="20" height="13" fill="#fbfcfe" stroke="#8ea8d4" stroke-width="1"/><defs><radialGradient id="gz0" cx="0.4" cy="0.35" r="0.75"><stop offset="0" stop-color="#a9c8f3"/><stop offset="1" stop-color="#6498e2"/></radialGradient></defs><path d="M16.5 16.5 L21.5 21" stroke="#5e6064" stroke-width="3.2" stroke-linecap="round"/><path d="M18 18 L21 20.6" stroke="#b8bcc2" stroke-width="1" stroke-linecap="round"/><circle cx="12" cy="12" r="5.6" fill="url(#gz0)" stroke="#7fa2d8" stroke-width="1"/><circle cx="12" cy="12" r="6.3" fill="none" stroke="#d5dbe4" stroke-width="1.3"/></svg><svg width="24" height="24" viewBox="0 0 24 24" style="left:787px;top:58px;"><path d="M15 15 L21.5 21" stroke="#5e6064" stroke-width="3.2" stroke-linecap="round"/><path d="M10 1 L19 10 L10 19 L1 10Z" fill="#8ab2ec" stroke="#7a9ed8" stroke-width="0.8"/><path d="M10 3 V17 M3 10 H17" stroke="#fff" stroke-width="1.4"/><path d="M10 1.8 L12 4.6 H8Z M10 18.2 L12 15.4 H8Z M1.8 10 L4.6 8 V12Z M18.2 10 L15.4 8 V12Z" fill="#fff"/></svg><svg width="24" height="24" viewBox="0 0 24 24" style="left:833px;top:58px;"><path d="M0.5 12.5 C4 4.5 17 3 23.5 11 C19.5 19.5 6.5 20.5 0.5 12.5Z" fill="#a9a9a7"/><path d="M5 12.2 C8 8.6 15.5 8 19.5 11.2 C16.5 15.2 8.5 15.6 5 12.2Z" fill="#fff"/><circle cx="12.2" cy="11.4" r="4.2" fill="#a9a9a7"/><circle cx="10.8" cy="10" r="1.2" fill="#fff"/><path d="M2 15 C6 19.5 15 20 21 15.5" stroke="#a9a9a7" stroke-width="1.2" fill="none"/><path d="M8 12 L12 16.5 L21 6" stroke="#8e8e8c" stroke-width="2.6" fill="none"/></svg><svg width="24" height="24" viewBox="0 0 24 24" style="left:863px;top:58px;"><path d="M0.5 12.5 C4 4.5 17 3 23.5 11 C19.5 19.5 6.5 20.5 0.5 12.5Z" fill="#000"/><path d="M5 12.2 C8 8.6 15.5 8 19.5 11.2 C16.5 15.2 8.5 15.6 5 12.2Z" fill="#fff"/><circle cx="12.2" cy="11.4" r="4.2" fill="#000"/><circle cx="10.8" cy="10" r="1.2" fill="#fff"/><path d="M2 15 C6 19.5 15 20 21 15.5" stroke="#000" stroke-width="1.2" fill="none"/></svg><svg width="24" height="24" viewBox="0 0 24 24" style="left:893px;top:58px;"><path d="M0.5 12.5 C4 4.5 17 3 23.5 11 C19.5 19.5 6.5 20.5 0.5 12.5Z" fill="#b0b0ae"/><path d="M5 12.2 C8 8.6 15.5 8 19.5 11.2 C16.5 15.2 8.5 15.6 5 12.2Z" fill="#fff"/><circle cx="12.2" cy="11.4" r="4.2" fill="#b0b0ae"/><circle cx="10.8" cy="10" r="1.2" fill="#fff"/><path d="M2 15 C6 19.5 15 20 21 15.5" stroke="#b0b0ae" stroke-width="1.2" fill="none"/></svg><svg width="24" height="24" viewBox="0 0 24 24" style="left:929px;top:58px;"><path d="M9.5 3 H14.5 V9.5 H21 V14.5 H14.5 V21 H9.5 V14.5 H3 V9.5 H9.5Z" fill="#e01818" stroke="#a80c0c" stroke-width="0.8"/></svg><svg width="24" height="24" viewBox="0 0 24 24" style="left:959px;top:58px;"><rect x="3.5" y="4.5" width="12" height="10" fill="#fbfbf9" stroke="#6a6a68" stroke-width="1"/><circle cx="14.5" cy="14" r="5.6" fill="#fbfbf9" fill-opacity="0.6" stroke="#6a6a68" stroke-width="1"/></svg><svg width="24" height="24" viewBox="0 0 24 24" style="left:997px;top:58px;"><rect x="3.5" y="10" width="17" height="4" rx="1" fill="#a4a4a2" stroke="#8e8e8c" stroke-width="0.6"/></svg><svg width="24" height="24" viewBox="0 0 24 24" style="left:1033px;top:58px;"><text x="0.5" y="18.5" font-family="Liberation Sans,sans-serif" font-size="15" fill="#666">a</text><path d="M11.5 3 V21" stroke="#666" stroke-width="1"/><text x="14" y="18.5" font-family="Liberation Sans,sans-serif" font-size="15" fill="#666">b</text></svg><svg width="24" height="24" viewBox="0 0 24 24" style="left:1063px;top:58px;"><path d="M18 2.5 L21.5 6 L9 18.5 L5.5 15Z" fill="#e0a23c" stroke="#9a6a1a" stroke-width="0.8"/><path d="M18 2.5 L21.5 6 L20 7.5 L16.5 4Z" fill="#e2463a"/><path d="M5.5 15 L9 18.5 L3.5 20.5Z" fill="#f2deb8" stroke="#9a7a4a" stroke-width="0.5"/><path d="M3.5 20.5 L4.4 18 L6 19.6Z" fill="#333"/><path d="M17 5.2 L7.2 15" stroke="#f6d48a" stroke-width="1"/></svg><svg width="24" height="24" viewBox="0 0 24 24" style="left:1093px;top:58px;"><path d="M18 2.5 L21.5 6 L9 18.5 L5.5 15Z" fill="#e0a23c" stroke="#9a6a1a" stroke-width="0.8"/><path d="M18 2.5 L21.5 6 L20 7.5 L16.5 4Z" fill="#e2463a"/><path d="M5.5 15 L9 18.5 L3.5 20.5Z" fill="#f2deb8" stroke="#9a7a4a" stroke-width="0.5"/><path d="M3.5 20.5 L4.4 18 L6 19.6Z" fill="#333"/><path d="M17 5.2 L7.2 15" stroke="#f6d48a" stroke-width="1"/><rect x="11.5" y="12.5" width="8" height="6" fill="#f7f7f0" stroke="#6a6a58" stroke-width="0.9"/><circle cx="18" cy="18" r="3.8" fill="#f4f2d8" stroke="#6a6a58" stroke-width="0.9"/></svg><svg width="24" height="24" viewBox="0 0 24 24" style="left:1123.5px;top:58px;"><rect x="3.5" y="3.5" width="17" height="17" rx="2.5" fill="#e8826c" stroke="#dc6a52" stroke-width="1"/><path d="M8.5 8.5 L15.5 15.5 M15.5 8.5 L8.5 15.5" stroke="#fff" stroke-width="2.6"/></svg><svg width="24" height="24" viewBox="0 0 24 24" style="left:1160px;top:58px;"><rect x="3.7" y="2.8" width="6.4" height="5.2" fill="#fde6e0" stroke="#ea6a54" stroke-width="1.1"/><circle cx="9.1" cy="7.6" r="2.6" fill="#fbd2c8" stroke="#ea6a54" stroke-width="0.9"/><rect x="13.9" y="7.7" width="6.4" height="5.2" fill="#fde6e0" stroke="#ea6a54" stroke-width="1.1"/><circle cx="19.3" cy="12.5" r="2.6" fill="#fbd2c8" stroke="#ea6a54" stroke-width="0.9"/><rect x="6" y="14" width="6.4" height="5.2" fill="#fde6e0" stroke="#ea6a54" stroke-width="1.1"/><circle cx="11.4" cy="18.8" r="2.6" fill="#fbd2c8" stroke="#ea6a54" stroke-width="0.9"/></svg><svg width="24" height="24" viewBox="0 0 24 24" style="left:1190px;top:58px;"><rect x="3.7" y="2.8" width="6.4" height="5.2" fill="#eeeee4" stroke="#56563e" stroke-width="1.1"/><circle cx="9.1" cy="7.6" r="2.6" fill="#f0edb8" stroke="#56563e" stroke-width="0.9"/><rect x="13.9" y="7.7" width="6.4" height="5.2" fill="#eeeee4" stroke="#56563e" stroke-width="1.1"/><circle cx="19.3" cy="12.5" r="2.6" fill="#f0edb8" stroke="#56563e" stroke-width="0.9"/><rect x="6" y="14" width="6.4" height="5.2" fill="#eeeee4" stroke="#56563e" stroke-width="1.1"/><circle cx="11.4" cy="18.8" r="2.6" fill="#f0edb8" stroke="#56563e" stroke-width="0.9"/></svg><svg width="24" height="24" viewBox="0 0 24 24" style="left:1227px;top:58px;"><rect x="4" y="2" width="16" height="20" fill="#e8e8e6" stroke="#d0d0ce" stroke-width="0.8"/><path d="M7 4.5 C14 3.5 15.5 7 14.8 13 H18 L12.5 20.5 L7.5 13 H10.8 C11.3 9 10.5 7.5 7 7.5Z" fill="#a9a9a7" stroke="#8e8e8c" stroke-width="0.6"/></svg><svg width="24" height="24" viewBox="0 0 24 24" style="left:1265px;top:58px;"><path d="M7 8.5 L11.5 2 L16.5 8.5 H13.4 V16 C13.4 18 15 18.6 19 18 V20.6 C12.5 22 9.8 20.5 9.8 16 V8.5Z" fill="#a4a4a2" stroke="#8a8a88" stroke-width="0.6"/></svg><svg width="24" height="24" viewBox="0 0 24 24" style="left:1302px;top:58px;"><path d="M13.2 6.2 L17.6 4.6 L22.4 19.2 L18 20.8Z" fill="#7e7e7c" stroke="#6a6a68" stroke-width="0.6" stroke-linejoin="round"/><path d="M15 5.5 C13.5 2.5 10.5 3.5 8.5 8" stroke="#8e8e8c" stroke-width="0.9" fill="none"/><path d="M6.3 5.6 L7.2 8 L9.6 7.2 L8 9.2 L10 10.6 L7.5 10.6 L7 13 L5.8 10.8 L3.4 11.6 L5 9.6 L3 8.2 L5.6 8.2Z" fill="#b4b4b2"/></svg><div style="left:46px;top:138px;width:16px;height:4px;background-image:radial-gradient(circle at 1px 1px,#d2cec8 0.6px,transparent 1px);background-size:3px 2px;"></div><div style="left:13px;top:148px;width:40px;height:40px;background:linear-gradient(#fbfbfa,#e3e2e0 48%,#ebeae8 52%,#f3f2f0);border:1px solid #a3a19d;"></div><svg width="40" height="40" viewBox="0 0 40 40" style="left:13px;top:148px"><path d="M12 8 V14 M9 11 H15 M29 18 V24 M26 21 H32 M13 26 V32 M10 29 H16" stroke="#111" stroke-width="1.1"/><path d="M35 30 V35 H30Z" fill="#111"/></svg><div style="left:53px;top:148px;width:40px;height:40px;background:linear-gradient(#fbfbfa,#e3e2e0 48%,#ebeae8 52%,#f3f2f0);border:1px solid #a3a19d;"></div><svg width="40" height="40" viewBox="0 0 40 40" style="left:53px;top:148px"><path d="M7 26 L33 14" stroke="#222" stroke-width="1.1" fill="none"/><path d="M35 30 V35 H30Z" fill="#111"/></svg><div style="left:13px;top:188px;width:40px;height:40px;background:linear-gradient(#fbfbfa,#e3e2e0 48%,#ebeae8 52%,#f3f2f0);border:1px solid #a3a19d;"></div><svg width="40" height="40" viewBox="0 0 40 40" style="left:13px;top:188px"><path d="M8 30 C9 17 18 9 30 8" stroke="#222" stroke-width="1.1" fill="none"/><path d="M35 30 V35 H30Z" fill="#111"/></svg><div style="left:53px;top:188px;width:40px;height:40px;background:linear-gradient(#fbfbfa,#e3e2e0 48%,#ebeae8 52%,#f3f2f0);border:1px solid #a3a19d;"></div><svg width="40" height="40" viewBox="0 0 40 40" style="left:53px;top:188px"><circle cx="18.5" cy="18.5" r="11" stroke="#222" stroke-width="1.1" fill="none"/><path d="M35 30 V35 H30Z" fill="#111"/></svg><div style="left:13px;top:228px;width:40px;height:40px;background:linear-gradient(#fbfbfa,#e3e2e0 48%,#ebeae8 52%,#f3f2f0);border:1px solid #a3a19d;"></div><svg width="40" height="40" viewBox="0 0 40 40" style="left:13px;top:228px"><ellipse cx="19.5" cy="19.5" rx="15" ry="7" transform="rotate(-45 19.5 19.5)" stroke="#222" stroke-width="1.1" fill="none"/><path d="M35 30 V35 H30Z" fill="#111"/></svg><div style="left:53px;top:228px;width:40px;height:40px;background:linear-gradient(#fbfbfa,#e3e2e0 48%,#ebeae8 52%,#f3f2f0);border:1px solid #a3a19d;"></div><svg width="40" height="40" viewBox="0 0 40 40" style="left:53px;top:228px"><path d="M8 11 C4 30 14 34 20 24 C26 12 32 6 32 17 C32 26 24 24 14 13 C11 10 9 9 8 11Z" stroke="#222" stroke-width="1.1" fill="none"/><path d="M35 30 V35 H30Z" fill="#111"/></svg><div style="left:13px;top:268px;width:40px;height:40px;background:linear-gradient(#fbfbfa,#e3e2e0 48%,#ebeae8 52%,#f3f2f0);border:1px solid #a3a19d;"></div><svg width="40" height="40" viewBox="0 0 40 40" style="left:13px;top:268px"><path d="M15 13 C8 13 6 23 14 23 H30" stroke="#222" stroke-width="1.1" fill="none"/><path d="M35 30 V35 H30Z" fill="#111"/></svg><div style="left:53px;top:268px;width:40px;height:40px;background:linear-gradient(#fbfbfa,#e3e2e0 48%,#ebeae8 52%,#f3f2f0);border:1px solid #a3a19d;"></div><svg width="40" height="40" viewBox="0 0 40 40" style="left:53px;top:268px"><path d="M9 6 H17 L21 13 L17 20 H9 L5 13Z M29 12 L35 21 H23Z M6 25 H22 V32 H6Z" stroke="#222" stroke-width="1.1" fill="none"/><path d="M35 30 V35 H30Z" fill="#111"/></svg><div style="left:13px;top:308px;width:40px;height:40px;background:linear-gradient(#fbfbfa,#e3e2e0 48%,#ebeae8 52%,#f3f2f0);border:1px solid #a3a19d;"></div><svg width="40" height="40" viewBox="0 0 40 40" style="left:13px;top:308px"><defs><pattern id="hat" width="3" height="3" patternUnits="userSpaceOnUse" patternTransform="rotate(45)"><rect width="3" height="3" fill="#f4f4f4"/><path d="M0 0 H3" stroke="#444" stroke-width="1"/></pattern></defs><path d="M8 19 L17 12 H31 V27 H8Z" fill="url(#hat)" stroke="#222" stroke-width="1.1"/><circle cx="22" cy="20" r="4" fill="#eee" stroke="#222" stroke-width="1"/><path d="M35 30 V35 H30Z" fill="#111"/></svg><div style="left:13px;top:357px;width:40px;height:40px;background:linear-gradient(#fbfbfa,#e3e2e0 48%,#ebeae8 52%,#f3f2f0);border:1px solid #a3a19d;"></div><svg width="40" height="40" viewBox="0 0 40 40" style="left:13px;top:357px"><text x="20" y="31" text-anchor="middle" font-family="Liberation Serif,serif" font-size="33" fill="#000">A</text></svg><div style="left:53px;top:357px;width:40px;height:40px;background:linear-gradient(#fbfbfa,#e3e2e0 48%,#ebeae8 52%,#f3f2f0);border:1px solid #a3a19d;"></div><svg width="40" height="40" viewBox="0 0 40 40" style="left:53px;top:357px"><path d="M9 10 V29 M30 10 V29 M9 13 H30" stroke="#111" stroke-width="1.2" fill="none"/><path d="M9 13 L13 11 V15Z M30 13 L26 11 V15Z" fill="#111"/><path d="M35 30 V35 H30Z" fill="#111"/></svg><div style="left:13px;top:397px;width:40px;height:40px;background:linear-gradient(#fbfbfa,#e3e2e0 48%,#ebeae8 52%,#f3f2f0);border:1px solid #a3a19d;"></div><svg width="40" height="40" viewBox="0 0 40 40" style="left:13px;top:397px"><defs><linearGradient id="gim" x1="0" y1="0" x2="0" y2="1"><stop offset="0" stop-color="#6a9adc"/><stop offset="0.35" stop-color="#7fa4d4"/><stop offset="0.4" stop-color="#5a554e"/><stop offset="0.75" stop-color="#8a7e72"/><stop offset="1" stop-color="#5f6a70"/></linearGradient></defs><rect x="7" y="10" width="26" height="19" fill="url(#gim)"/><path d="M7 19 L28 14 L33 16 V29 H7Z" fill="#4a4640" fill-opacity="0.55"/><path d="M27 17 L33 13 V29 H29Z" fill="#c6c0b6" fill-opacity="0.8"/></svg><div style="left:13px;top:444.5px;width:40px;height:40px;background:linear-gradient(#fbfbfa,#e3e2e0 48%,#ebeae8 52%,#f3f2f0);border:1px solid #a3a19d;"></div><svg width="40" height="40" viewBox="0 0 40 40" style="left:13px;top:444.5px"><path d="M6 31 V11 L27 31Z" fill="#e6e6e4" stroke="#555" stroke-width="1"/><path d="M9 27 A12 12 0 0 1 20 29" fill="none" stroke="#888" stroke-width="0.8"/><path d="M10 29 V21 L19 29Z" fill="#cfcfcd" stroke="#888" stroke-width="0.6"/><path d="M11 5 L14 3 L22 11 L19.5 13.5Z" fill="#e02a22" stroke="#a01410" stroke-width="0.6"/><path d="M19.5 13.5 L22 11 L23.5 15Z" fill="#f0d8b0"/><path d="M11 5 L14 3 L15.4 4.4 L12.4 6.4Z" fill="#f08078"/><path d="M30 5 L28 26 M30 5 L33 26 M30 3 V6" stroke="#444" stroke-width="1.3" fill="none"/><path d="M35 30 V35 H30Z" fill="#111"/></svg><div style="left:53px;top:444.5px;width:40px;height:40px;background:linear-gradient(#fbfbfa,#e3e2e0 48%,#ebeae8 52%,#f3f2f0);border:1px solid #a3a19d;"></div><svg width="40" height="40" viewBox="0 0 40 40" style="left:53px;top:444.5px"><rect x="6" y="15" width="28" height="9" rx="1.2" fill="#e4a860" stroke="#b87a34" stroke-width="0.8"/><path d="M6.5 22.5 H33.5" stroke="#c88a44" stroke-width="1.4"/><path d="M8 15.5 V19" stroke="#8a5a20" stroke-width="0.6"/><path d="M10.4 15.5 V17.5" stroke="#8a5a20" stroke-width="0.6"/><path d="M12.8 15.5 V17.5" stroke="#8a5a20" stroke-width="0.6"/><path d="M15.2 15.5 V17.5" stroke="#8a5a20" stroke-width="0.6"/><path d="M17.6 15.5 V17.5" stroke="#8a5a20" stroke-width="0.6"/><path d="M20 15.5 V19" stroke="#8a5a20" stroke-width="0.6"/><path d="M22.4 15.5 V17.5" stroke="#8a5a20" stroke-width="0.6"/><path d="M24.8 15.5 V17.5" stroke="#8a5a20" stroke-width="0.6"/><path d="M27.2 15.5 V17.5" stroke="#8a5a20" stroke-width="0.6"/><path d="M29.6 15.5 V17.5" stroke="#8a5a20" stroke-width="0.6"/><path d="M32 15.5 V19" stroke="#8a5a20" stroke-width="0.6"/><path d="M35 30 V35 H30Z" fill="#111"/></svg><div style="left:13px;top:484.5px;width:40px;height:40px;background:linear-gradient(#fbfbfa,#e3e2e0 48%,#ebeae8 52%,#f3f2f0);border:1px solid #a3a19d;"></div><svg width="40" height="40" viewBox="0 0 40 40" style="left:13px;top:484.5px"><rect x="9" y="9" width="19" height="15" fill="#f6f6f4" stroke="#444" stroke-width="1"/><circle cx="24.5" cy="23" r="8" fill="#f6f6f4" fill-opacity="0.5" stroke="#444" stroke-width="1"/><path d="M6 24 H11 M8.5 21.5 V26.5" stroke="#888" stroke-width="0.7"/></svg><div style="left:53px;top:484.5px;width:40px;height:40px;background:linear-gradient(#fbfbfa,#e3e2e0 48%,#ebeae8 52%,#f3f2f0);border:1px solid #a3a19d;"></div><svg width="40" height="40" viewBox="0 0 40 40" style="left:53px;top:484.5px"><path d="M7 19 L27 7" stroke="#e02030" stroke-width="1.2"/><path d="M19 13 L19 27 L22.4 23.8 L24.8 29 L26.8 28 L24.4 23 L28.6 23Z" fill="#fff" stroke="#555" stroke-width="1" stroke-linejoin="round"/><path d="M35 30 V35 H30Z" fill="#111"/></svg><div style="left:13px;top:532px;width:40px;height:40px;background:linear-gradient(#fbfbfa,#e3e2e0 48%,#ebeae8 52%,#f3f2f0);border:1px solid #a3a19d;"></div><svg width="40" height="40" viewBox="0 0 40 40" style="left:13px;top:532px"><path d="M8 17 L22 9 L31 14 V25 L18 33 L8 27Z M8 17 L18 22 L31 14 M18 22 V33" stroke="#111" stroke-width="1.2" fill="none" stroke-linejoin="round"/><path d="M35 30 V35 H30Z" fill="#111"/></svg><div style="left:97px;top:132px;width:1235px;height:757px;border-left:1px solid #b9b6b0;border-top:1px solid #b9b6b0;"></div><div style="left:97px;top:135px;width:620px;height:29px;background:linear-gradient(#e3e0dc,#dddad5);border:1px solid #b7b4ae;border-bottom:1px solid #aaa7a1;"></div><div style="left:716px;top:133px;width:616px;height:32px;background:linear-gradient(#f6f5f2,#f0eeea);border:1px solid #b7b4ae;border-bottom:none;border-radius:3px 3px 0 0;"></div><svg width="14" height="14" viewBox="0 0 14 14" style="left:110px;top:142px"><circle cx="6.5" cy="6.5" r="4.9" fill="#fdfdfb" stroke="#1c2a78" stroke-width="2.3"/><path d="M6.5 3.6 V6.5 H3.8" stroke="#e8a0a0" stroke-width="0.8" fill="none"/><path d="M7 6.6 L12.6 12.4" stroke="#f0b428" stroke-width="2.2" stroke-linecap="round"/></svg><svg width="14" height="14" viewBox="0 0 14 14" style="left:728px;top:141px"><circle cx="6.5" cy="6.5" r="4.9" fill="#fdfdfb" stroke="#1c2a78" stroke-width="2.3"/><path d="M6.5 3.6 V6.5 H3.8" stroke="#e8a0a0" stroke-width="0.8" fill="none"/><path d="M7 6.6 L12.6 12.4" stroke="#f0b428" stroke-width="2.2" stroke-linecap="round"/></svg><svg width="13" height="12" viewBox="0 0 14 13" style="left:685.5px;top:144px"><path d="M2.5 1 C5 4 8.5 8 12 11.5 M11.5 0.8 C8 5 4.5 9 0.8 12" stroke="#111" stroke-width="2.1" fill="none" stroke-linecap="round"/></svg><svg width="13" height="12" viewBox="0 0 14 13" style="left:1302.5px;top:143px"><path d="M2.5 1 C5 4 8.5 8 12 11.5 M11.5 0.8 C8 5 4.5 9 0.8 12" stroke="#111" stroke-width="2.1" fill="none" stroke-linecap="round"/></svg><div class="t" style="left:256px;width:300px;top:144px;text-align:center">無題<span class="l" style="margin-right:-1.20px">1</span></div><div class="t" style="left:874px;width:300px;top:143px;text-align:center"><span class="l" style="margin-right:-27.60px">2A3single-ended-amp.dxf</span></div><div style="left:97px;top:164px;width:1235px;height:24px;background:#efebe7;border-top:1px solid #fbfaf9;"></div><div style="left:97px;top:188px;width:23px;height:686px;background:#efebe7;"></div><div style="left:98px;top:165px;width:22px;height:23px;border:1px solid #fbfaf9;border-right-color:#f6f5f3;border-bottom-color:#f6f5f3;background:#efebe7;"></div><div style="left:1318px;top:165px;width:14px;height:23px;border:1px solid #fbfaf9;background:#ece9e5;"></div><div style="left:120px;top:188px;width:1198px;height:686px;background:#000;"></div><div style="left:144px;top:181px;width:1px;height:7px;background:#000;"></div><div class="t" style="left:134.5px;top:166px"><span class="l" style="margin-right:-3.60px">-70</span></div><div style="left:180px;top:181px;width:1px;height:7px;background:#000;"></div><div class="t" style="left:170.5px;top:166px"><span class="l" style="margin-right:-3.60px">-60</span></div><div style="left:217px;top:181px;width:1px;height:7px;background:#000;"></div><div class="t" style="left:207.5px;top:166px"><span class="l" style="margin-right:-3.60px">-50</span></div><div style="left:253px;top:181px;width:1px;height:7px;background:#000;"></div><div class="t" style="left:243.5px;top:166px"><span class="l" style="margin-right:-3.60px">-40</span></div><div style="left:290px;top:181px;width:1px;height:7px;background:#000;"></div><div class="t" style="left:280.5px;top:166px"><span class="l" style="margin-right:-3.60px">-30</span></div><div style="left:326px;top:181px;width:1px;height:7px;background:#000;"></div><div class="t" style="left:316.5px;top:166px"><span class="l" style="margin-right:-3.60px">-20</span></div><div style="left:363px;top:181px;width:1px;height:7px;background:#000;"></div><div class="t" style="left:353.5px;top:166px"><span class="l" style="margin-right:-3.60px">-10</span></div><div style="left:399px;top:181px;width:1px;height:7px;background:#000;"></div><div class="t" style="left:395.5px;top:166px"><span class="l" style="margin-right:-1.20px">0</span></div><div style="left:436px;top:181px;width:1px;height:7px;background:#000;"></div><div class="t" style="left:429.5px;top:166px"><span class="l" style="margin-right:-2.40px">10</span></div><div style="left:473px;top:181px;width:1px;height:7px;background:#000;"></div><div class="t" style="left:466.5px;top:166px"><span class="l" style="margin-right:-2.40px">20</span></div><div style="left:509px;top:181px;width:1px;height:7px;background:#000;"></div><div class="t" style="left:502.5px;top:166px"><span class="l" style="margin-right:-2.40px">30</span></div><div style="left:546px;top:181px;width:1px;height:7px;background:#000;"></div><div class="t" style="left:539.5px;top:166px"><span class="l" style="margin-right:-2.40px">40</span></div><div style="left:582px;top:181px;width:1px;height:7px;background:#000;"></div><div class="t" style="left:575.5px;top:166px"><span class="l" style="margin-right:-2.40px">50</span></div><div style="left:619px;top:181px;width:1px;height:7px;background:#000;"></div><div class="t" style="left:612.5px;top:166px"><span class="l" style="margin-right:-2.40px">60</span></div><div style="left:655px;top:181px;width:1px;height:7px;background:#000;"></div><div class="t" style="left:648.5px;top:166px"><span class="l" style="margin-right:-2.40px">70</span></div><div style="left:692px;top:181px;width:1px;height:7px;background:#000;"></div><div class="t" style="left:685.5px;top:166px"><span class="l" style="margin-right:-2.40px">80</span></div><div style="left:728px;top:181px;width:1px;height:7px;background:#000;"></div><div class="t" style="left:721.5px;top:166px"><span class="l" style="margin-right:-2.40px">90</span></div><div style="left:765px;top:181px;width:1px;height:7px;background:#000;"></div><div class="t" style="left:755.5px;top:166px"><span class="l" style="margin-right:-3.60px">100</span></div><div style="left:801px;top:181px;width:1px;height:7px;background:#000;"></div><div class="t" style="left:791.5px;top:166px"><span class="l" style="margin-right:-3.60px">110</span></div><div style="left:838px;top:181px;width:1px;height:7px;background:#000;"></div><div class="t" style="left:828.5px;top:166px"><span class="l" style="margin-right:-3.60px">120</span></div><div style="left:875px;top:181px;width:1px;height:7px;background:#000;"></div><div class="t" style="left:865.5px;top:166px"><span class="l" style="margin-right:-3.60px">130</span></div><div style="left:911px;top:181px;width:1px;height:7px;background:#000;"></div><div class="t" style="left:901.5px;top:166px"><span class="l" style="margin-right:-3.60px">140</span></div><div style="left:948px;top:181px;width:1px;height:7px;background:#000;"></div><div class="t" style="left:938.5px;top:166px"><span class="l" style="margin-right:-3.60px">150</span></div><div style="left:984px;top:181px;width:1px;height:7px;background:#000;"></div><div class="t" style="left:974.5px;top:166px"><span class="l" style="margin-right:-3.60px">160</span></div><div style="left:1021px;top:181px;width:1px;height:7px;background:#000;"></div><div class="t" style="left:1011.5px;top:166px"><span class="l" style="margin-right:-3.60px">170</span></div><div style="left:1057px;top:181px;width:1px;height:7px;background:#000;"></div><div class="t" style="left:1047.5px;top:166px"><span class="l" style="margin-right:-3.60px">180</span></div><div style="left:1094px;top:181px;width:1px;height:7px;background:#000;"></div><div class="t" style="left:1084.5px;top:166px"><span class="l" style="margin-right:-3.60px">190</span></div><div style="left:1130px;top:181px;width:1px;height:7px;background:#000;"></div><div class="t" style="left:1120.5px;top:166px"><span class="l" style="margin-right:-3.60px">200</span></div><div style="left:1167px;top:181px;width:1px;height:7px;background:#000;"></div><div class="t" style="left:1157.5px;top:166px"><span class="l" style="margin-right:-3.60px">210</span></div><div style="left:1204px;top:181px;width:1px;height:7px;background:#000;"></div><div class="t" style="left:1194.5px;top:166px"><span class="l" style="margin-right:-3.60px">220</span></div><div style="left:1240px;top:181px;width:1px;height:7px;background:#000;"></div><div class="t" style="left:1230.5px;top:166px"><span class="l" style="margin-right:-3.60px">230</span></div><div style="left:1277px;top:181px;width:1px;height:7px;background:#000;"></div><div class="t" style="left:1267.5px;top:166px"><span class="l" style="margin-right:-3.60px">240</span></div><div style="left:1313px;top:181px;width:1px;height:7px;background:#000;"></div><div class="t" style="left:1303.5px;top:166px;width:15px;overflow:hidden"><span class="l" style="margin-right:-3.60px">250</span></div><div style="left:113px;top:856px;width:7px;height:1px;background:#000;"></div><div class="t" style="left:103.5px;top:847.5px;width:6px;transform:rotate(-90deg);transform-origin:50% 50%"><span class="l" style="margin-right:-1.20px">0</span></div><div style="left:113px;top:820px;width:7px;height:1px;background:#000;"></div><div class="t" style="left:100.5px;top:811.5px;width:12px;transform:rotate(-90deg);transform-origin:50% 50%"><span class="l" style="margin-right:-2.40px">10</span></div><div style="left:113px;top:783px;width:7px;height:1px;background:#000;"></div><div class="t" style="left:100.5px;top:774.5px;width:12px;transform:rotate(-90deg);transform-origin:50% 50%"><span class="l" style="margin-right:-2.40px">20</span></div><div style="left:113px;top:747px;width:7px;height:1px;background:#000;"></div><div class="t" style="left:100.5px;top:738.5px;width:12px;transform:rotate(-90deg);transform-origin:50% 50%"><span class="l" style="margin-right:-2.40px">30</span></div><div style="left:113px;top:710px;width:7px;height:1px;background:#000;"></div><div class="t" style="left:100.5px;top:701.5px;width:12px;transform:rotate(-90deg);transform-origin:50% 50%"><span class="l" style="margin-right:-2.40px">40</span></div><div style="left:113px;top:674px;width:7px;height:1px;background:#000;"></div><div class="t" style="left:100.5px;top:665.5px;width:12px;transform:rotate(-90deg);transform-origin:50% 50%"><span class="l" style="margin-right:-2.40px">50</span></div><div style="left:113px;top:637px;width:7px;height:1px;background:#000;"></div><div class="t" style="left:100.5px;top:628.5px;width:12px;transform:rotate(-90deg);transform-origin:50% 50%"><span class="l" style="margin-right:-2.40px">60</span></div><div style="left:113px;top:601px;width:7px;height:1px;background:#000;"></div><div class="t" style="left:100.5px;top:592.5px;width:12px;transform:rotate(-90deg);transform-origin:50% 50%"><span class="l" style="margin-right:-2.40px">70</span></div><div style="left:113px;top:564px;width:7px;height:1px;background:#000;"></div><div class="t" style="left:100.5px;top:555.5px;width:12px;transform:rotate(-90deg);transform-origin:50% 50%"><span class="l" style="margin-right:-2.40px">80</span></div><div style="left:113px;top:527px;width:7px;height:1px;background:#000;"></div><div class="t" style="left:100.5px;top:518.5px;width:12px;transform:rotate(-90deg);transform-origin:50% 50%"><span class="l" style="margin-right:-2.40px">90</span></div><div style="left:113px;top:491px;width:7px;height:1px;background:#000;"></div><div class="t" style="left:97.5px;top:482.5px;width:18px;transform:rotate(-90deg);transform-origin:50% 50%"><span class="l" style="margin-right:-3.60px">100</span></div><div style="left:113px;top:454px;width:7px;height:1px;background:#000;"></div><div class="t" style="left:97.5px;top:445.5px;width:18px;transform:rotate(-90deg);transform-origin:50% 50%"><span class="l" style="margin-right:-3.60px">110</span></div><div style="left:113px;top:418px;width:7px;height:1px;background:#000;"></div><div class="t" style="left:97.5px;top:409.5px;width:18px;transform:rotate(-90deg);transform-origin:50% 50%"><span class="l" style="margin-right:-3.60px">120</span></div><div style="left:113px;top:381px;width:7px;height:1px;background:#000;"></div><div class="t" style="left:97.5px;top:372.5px;width:18px;transform:rotate(-90deg);transform-origin:50% 50%"><span class="l" style="margin-right:-3.60px">130</span></div><div style="left:113px;top:345px;width:7px;height:1px;background:#000;"></div><div class="t" style="left:97.5px;top:336.5px;width:18px;transform:rotate(-90deg);transform-origin:50% 50%"><span class="l" style="margin-right:-3.60px">140</span></div><div style="left:113px;top:308px;width:7px;height:1px;background:#000;"></div><div class="t" style="left:97.5px;top:299.5px;width:18px;transform:rotate(-90deg);transform-origin:50% 50%"><span class="l" style="margin-right:-3.60px">150</span></div><div style="left:113px;top:272px;width:7px;height:1px;background:#000;"></div><div class="t" style="left:97.5px;top:263.5px;width:18px;transform:rotate(-90deg);transform-origin:50% 50%"><span class="l" style="margin-right:-3.60px">160</span></div><div style="left:113px;top:235px;width:7px;height:1px;background:#000;"></div><div class="t" style="left:97.5px;top:226.5px;width:18px;transform:rotate(-90deg);transform-origin:50% 50%"><span class="l" style="margin-right:-3.60px">170</span></div><div style="left:113px;top:198px;width:7px;height:1px;background:#000;"></div><div class="t" style="left:97.5px;top:189.5px;width:18px;transform:rotate(-90deg);transform-origin:50% 50%"><span class="l" style="margin-right:-3.60px">180</span></div><svg width="7" height="4" viewBox="0 0 7 4" style="left:838px;top:182px"><path d="M0 0 H7 L3.5 4Z" fill="#111"/></svg><svg width="4" height="7" viewBox="0 0 4 7" style="left:112px;top:514px"><path d="M0 0 V7 L4 3.5Z" fill="#111"/></svg><div style="left:1318px;top:188px;width:14px;height:686px;background:#e3e1dd;"></div><div style="left:1318px;top:430px;width:14px;height:203px;background:linear-gradient(90deg,#fdfdfc,#f1efeb);border-top:1px solid #a9a6a1;border-bottom:1px solid #a9a6a1;"></div><div style="left:1318px;top:188px;width:14px;height:13px;background:#f7f6f4;"></div><div style="left:1318px;top:861px;width:14px;height:13px;background:#f7f6f4;"></div><svg width="8" height="5" viewBox="0 0 8 5" style="left:1321px;top:192px"><path d="M0 5 L4 0 L8 5Z" fill="#4a4a4a"/></svg><svg width="8" height="5" viewBox="0 0 8 5" style="left:1321px;top:865px"><path d="M0 0 L4 5 L8 0Z" fill="#4a4a4a"/></svg><div style="left:97px;top:874px;width:1235px;height:15px;background:#efebe7;"></div><div style="left:98px;top:875px;width:22px;height:13px;border:1px solid #fbfaf9;border-left-color:#c9c6c1;border-top-color:#c9c6c1;"></div><div style="left:120px;top:874px;width:1144px;height:14px;background:#e3e1dd;"></div><div style="left:422px;top:874px;width:540px;height:14px;background:linear-gradient(#fdfdfc,#f1efeb);border-left:1px solid #a9a6a1;border-right:1px solid #a9a6a1;"></div><div style="left:120px;top:874px;width:13px;height:14px;background:#f7f6f4;"></div><div style="left:1251px;top:874px;width:13px;height:14px;background:#f7f6f4;"></div><svg width="5" height="8" viewBox="0 0 5 8" style="left:123px;top:877px"><path d="M5 0 L0 4 L5 8Z" fill="#4a4a4a"/></svg><svg width="5" height="8" viewBox="0 0 5 8" style="left:1255px;top:877px"><path d="M0 0 L5 4 L0 8Z" fill="#4a4a4a"/></svg><div class="t" style="left:1284px;top:875px"><span class="l" style="margin-right:-9.60px">10 &lt; 100</span></div><div style="left:1333px;top:500px;width:3px;height:22px;background-image:radial-gradient(circle at 1px 1px,#c4c0b9 0.7px,transparent 1px);background-size:3px 3px;"></div><div style="left:120px;top:188px;width:1198px;height:686px;overflow:hidden">
<svg width="1198" height="686" viewBox="120 188 1198 686" style="left:0;top:0" shape-rendering="crispEdges" fill="none" stroke="#fff" stroke-width="1">
<path d="M144 857h1M144 820h1M144 784h1M144 747h1M144 711h1M144 674h1M144 638h1M144 601h1M144 564h1M144 528h1M144 491h1M144 455h1M144 418h1M144 382h1M144 345h1M144 309h1M144 272h1M144 235h1M144 199h1M181 857h1M181 820h1M181 784h1M181 747h1M181 711h1M181 674h1M181 638h1M181 601h1M181 564h1M181 528h1M181 491h1M181 455h1M181 418h1M181 382h1M181 345h1M181 309h1M181 272h1M181 235h1M181 199h1M217 857h1M217 820h1M217 784h1M217 747h1M217 711h1M217 674h1M217 638h1M217 601h1M217 564h1M217 528h1M217 491h1M217 455h1M217 418h1M217 382h1M217 345h1M217 309h1M217 272h1M217 235h1M217 199h1M254 857h1M254 820h1M254 784h1M254 747h1M254 711h1M254 674h1M254 638h1M254 601h1M254 564h1M254 528h1M254 491h1M254 455h1M254 418h1M254 382h1M254 345h1M254 309h1M254 272h1M254 235h1M254 199h1M290 857h1M290 820h1M290 784h1M290 747h1M290 711h1M290 674h1M290 638h1M290 601h1M290 564h1M290 528h1M290 491h1M290 455h1M290 418h1M290 382h1M290 345h1M290 309h1M290 272h1M290 235h1M290 199h1M327 857h1M327 820h1M327 784h1M327 747h1M327 711h1M327 674h1M327 638h1M327 601h1M327 564h1M327 528h1M327 491h1M327 455h1M327 418h1M327 382h1M327 345h1M327 309h1M327 272h1M327 235h1M327 199h1M363 857h1M363 820h1M363 784h1M363 747h1M363 711h1M363 674h1M363 638h1M363 601h1M363 564h1M363 528h1M363 491h1M363 455h1M363 418h1M363 382h1M363 345h1M363 309h1M363 272h1M363 235h1M363 199h1M400 857h1M400 820h1M400 784h1M400 747h1M400 711h1M400 674h1M400 638h1M400 601h1M400 564h1M400 528h1M400 491h1M400 455h1M400 418h1M400 382h1M400 345h1M400 309h1M400 272h1M400 235h1M400 199h1M437 857h1M437 820h1M437 784h1M437 747h1M437 711h1M437 674h1M437 638h1M437 601h1M437 564h1M437 528h1M437 491h1M437 455h1M437 418h1M437 382h1M437 345h1M437 309h1M437 272h1M437 235h1M437 199h1M473 857h1M473 820h1M473 784h1M473 747h1M473 711h1M473 674h1M473 638h1M473 601h1M473 564h1M473 528h1M473 491h1M473 455h1M473 418h1M473 382h1M473 345h1M473 309h1M473 272h1M473 235h1M473 199h1M510 857h1M510 820h1M510 784h1M510 747h1M510 711h1M510 674h1M510 638h1M510 601h1M510 564h1M510 528h1M510 491h1M510 455h1M510 418h1M510 382h1M510 345h1M510 309h1M510 272h1M510 235h1M510 199h1M546 857h1M546 820h1M546 784h1M546 747h1M546 711h1M546 674h1M546 638h1M546 601h1M546 564h1M546 528h1M546 491h1M546 455h1M546 418h1M546 382h1M546 345h1M546 309h1M546 272h1M546 235h1M546 199h1M583 857h1M583 820h1M583 784h1M583 747h1M583 711h1M583 674h1M583 638h1M583 601h1M583 564h1M583 528h1M583 491h1M583 455h1M583 418h1M583 382h1M583 345h1M583 309h1M583 272h1M583 235h1M583 199h1M619 857h1M619 820h1M619 784h1M619 747h1M619 711h1M619 674h1M619 638h1M619 601h1M619 564h1M619 528h1M619 491h1M619 455h1M619 418h1M619 382h1M619 345h1M619 309h1M619 272h1M619 235h1M619 199h1M656 857h1M656 820h1M656 784h1M656 747h1M656 711h1M656 674h1M656 638h1M656 601h1M656 564h1M656 528h1M656 491h1M656 455h1M656 418h1M656 382h1M656 345h1M656 309h1M656 272h1M656 235h1M656 199h1M692 857h1M692 820h1M692 784h1M692 747h1M692 711h1M692 674h1M692 638h1M692 601h1M692 564h1M692 528h1M692 491h1M692 455h1M692 418h1M692 382h1M692 345h1M692 309h1M692 272h1M692 235h1M692 199h1M729 857h1M729 820h1M729 784h1M729 747h1M729 711h1M729 674h1M729 638h1M729 601h1M729 564h1M729 528h1M729 491h1M729 455h1M729 418h1M729 382h1M729 345h1M729 309h1M729 272h1M729 235h1M729 199h1M766 857h1M766 820h1M766 784h1M766 747h1M766 711h1M766 674h1M766 638h1M766 601h1M766 564h1M766 528h1M766 491h1M766 455h1M766 418h1M766 382h1M766 345h1M766 309h1M766 272h1M766 235h1M766 199h1M802 857h1M802 820h1M802 784h1M802 747h1M802 711h1M802 674h1M802 638h1M802 601h1M802 564h1M802 528h1M802 491h1M802 455h1M802 418h1M802 382h1M802 345h1M802 309h1M802 272h1M802 235h1M802 199h1M839 857h1M839 820h1M839 784h1M839 747h1M839 711h1M839 674h1M839 638h1M839 601h1M839 564h1M839 528h1M839 491h1M839 455h1M839 418h1M839 382h1M839 345h1M839 309h1M839 272h1M839 235h1M839 199h1M875 857h1M875 820h1M875 784h1M875 747h1M875 711h1M875 674h1M875 638h1M875 601h1M875 564h1M875 528h1M875 491h1M875 455h1M875 418h1M875 382h1M875 345h1M875 309h1M875 272h1M875 235h1M875 199h1M912 857h1M912 820h1M912 784h1M912 747h1M912 711h1M912 674h1M912 638h1M912 601h1M912 564h1M912 528h1M912 491h1M912 455h1M912 418h1M912 382h1M912 345h1M912 309h1M912 272h1M912 235h1M912 199h1M948 857h1M948 820h1M948 784h1M948 747h1M948 711h1M948 674h1M948 638h1M948 601h1M948 564h1M948 528h1M948 491h1M948 455h1M948 418h1M948 382h1M948 345h1M948 309h1M948 272h1M948 235h1M948 199h1M985 857h1M985 820h1M985 784h1M985 747h1M985 711h1M985 674h1M985 638h1M985 601h1M985 564h1M985 528h1M985 491h1M985 455h1M985 418h1M985 382h1M985 345h1M985 309h1M985 272h1M985 235h1M985 199h1M1021 857h1M1021 820h1M1021 784h1M1021 747h1M1021 711h1M1021 674h1M1021 638h1M1021 601h1M1021 564h1M1021 528h1M1021 491h1M1021 455h1M1021 418h1M1021 382h1M1021 345h1M1021 309h1M1021 272h1M1021 235h1M1021 199h1M1058 857h1M1058 820h1M1058 784h1M1058 747h1M1058 711h1M1058 674h1M1058 638h1M1058 601h1M1058 564h1M1058 528h1M1058 491h1M1058 455h1M1058 418h1M1058 382h1M1058 345h1M1058 309h1M1058 272h1M1058 235h1M1058 199h1M1094 857h1M1094 820h1M1094 784h1M1094 747h1M1094 711h1M1094 674h1M1094 638h1M1094 601h1M1094 564h1M1094 528h1M1094 491h1M1094 455h1M1094 418h1M1094 382h1M1094 345h1M1094 309h1M1094 272h1M1094 235h1M1094 199h1M1131 857h1M1131 820h1M1131 784h1M1131 747h1M1131 711h1M1131 674h1M1131 638h1M1131 601h1M1131 564h1M1131 528h1M1131 491h1M1131 455h1M1131 418h1M1131 382h1M1131 345h1M1131 309h1M1131 272h1M1131 235h1M1131 199h1M1168 857h1M1168 820h1M1168 784h1M1168 747h1M1168 711h1M1168 674h1M1168 638h1M1168 601h1M1168 564h1M1168 528h1M1168 491h1M1168 455h1M1168 418h1M1168 382h1M1168 345h1M1168 309h1M1168 272h1M1168 235h1M1168 199h1M1204 857h1M1204 820h1M1204 784h1M1204 747h1M1204 711h1M1204 674h1M1204 638h1M1204 601h1M1204 564h1M1204 528h1M1204 491h1M1204 455h1M1204 418h1M1204 382h1M1204 345h1M1204 309h1M1204 272h1M1204 235h1M1204 199h1M1241 857h1M1241 820h1M1241 784h1M1241 747h1M1241 711h1M1241 674h1M1241 638h1M1241 601h1M1241 564h1M1241 528h1M1241 491h1M1241 455h1M1241 418h1M1241 382h1M1241 345h1M1241 309h1M1241 272h1M1241 235h1M1241 199h1M1277 857h1M1277 820h1M1277 784h1M1277 747h1M1277 711h1M1277 674h1M1277 638h1M1277 601h1M1277 564h1M1277 528h1M1277 491h1M1277 455h1M1277 418h1M1277 382h1M1277 345h1M1277 309h1M1277 272h1M1277 235h1M1277 199h1M1314 857h1M1314 820h1M1314 784h1M1314 747h1M1314 711h1M1314 674h1M1314 638h1M1314 601h1M1314 564h1M1314 528h1M1314 491h1M1314 455h1M1314 418h1M1314 382h1M1314 345h1M1314 309h1M1314 272h1M1314 235h1M1314 199h1" stroke="#8e8e8e" transform="translate(0,0.5)"/>
<path d="M399.5 188 V874" stroke="#4e4e4e"/>
<path d="M765.5 188 V874" stroke="#4e4e4e"/>
<path d="M1130.5 188 V874" stroke="#4e4e4e"/>
<path d="M120 856.5 H1318" stroke="#4e4e4e"/>
<path d="M120 491.5 H1318" stroke="#4e4e4e"/>
<path d="M379 856.5 H421 M399.5 836 V874" stroke="#c81414"/>
<g transform="translate(0.5,0.5)">
<path d="M432 254 a25.5 25.5 0 0 1 51 0 V267 a25.5 25.5 0 0 1 -51 0 Z"/>
<path d="M458 239 V213 H629 M450 239 H466 M498 213 V260 H480"/>
<path d="M432 250 H475" stroke-dasharray="4 4 9 4 9 4 8 50"/>
<path d="M440 260 H475" stroke-dasharray="9 4 9 4 8 50"/>
<path d="M432 271 H475" stroke-dasharray="4 4 9 4 9 4 8 50"/>
<path d="M432 250 H418 V313 H447"/>
<path d="M358 272 H395 M395 271 H432"/>
<path d="M447 291 A10.7 10.7 0 0 1 469 289.5"/>
<path d="M451 308 V292.5 A7 7 0 0 1 465 292.5 V308"/>
<path d="M447 290 V357 M448 357 V381"/>
<polyline points="448.5,381 454.5,383.5 443,390 454.5,396 443,402.5 454.5,408.5 443,415 454.5,420.5 443,425.5 448,427.5" stroke="#fff"/>
<path d="M448 427 V457 M447 457 V475 M446 475 V503"/>
<path d="M434 503 H458" stroke="#fff"/><path d="M437.5 503 L434.3 512.5" stroke="#fff"/><path d="M442.75 503 L439.55 512.5" stroke="#fff"/><path d="M448 503 L444.8 512.5" stroke="#fff"/><path d="M453.25 503 L450.05 512.5" stroke="#fff"/>
<path d="M629 213 V290 M630 290 V347"/>
<polyline points="630.5,347.5 637,350 624,356.5 637,362.5 624,368.5 637,374.5 624,380 637,386 624,392 630.5,394" stroke="#fff"/>
<path d="M630 394 V418"/>
<path d="M629 253 H696 M696 241 V265 M705 241 V265 M705 253 H716 M716 254 H799"/>
<path d="M754 254 V321 M755 321 V345"/>
<polyline points="755.5,344.5 762,347 749,353.5 762,359.5 749,365.5 762,371.5 749,377 762,383 749,389 755.5,391" stroke="#fff"/>
<path d="M755 391 V415"/>
<circle cx="825" cy="254" r="26"/>
<path d="M825 239 V214 H1087 V302 H1114 M818 239 H833"/>
<path d="M799 254 H842" stroke-dasharray="5 3"/>
<path d="M819 294 V279 A6.8 6.8 0 0 1 832 279 V294"/>
<path d="M819 294 L801.5 311 M832 294 L849.5 308"/>
<path d="M801.5 311 V328 M802.5 328 V343 H787 V381 M849 308 V345 H876 V377"/>
<path d="M786 381 V420 M785 420 V436 H811 M876 377 V418 M877 418 V436 H857"/>
<polyline points="811,436 813.5,430 819.5,441.5 825.5,430 831.5,441.5 837,430 843.5,441.5 849.5,430 855,441.5 857.5,436" stroke="#fff"/>
<path d="M830.5 442 L828 447.5 H833 Z M830.5 447 V460 M830 460 V506" stroke="#d2d2d2"/>
<path d="M819 506 H843" stroke="#c4c4c4"/><path d="M822.5 506 L819.3 515.5" stroke="#c4c4c4"/><path d="M827.75 506 L824.55 515.5" stroke="#c4c4c4"/><path d="M833 506 L829.8 515.5" stroke="#c4c4c4"/><path d="M838.25 506 L835.05 515.5" stroke="#c4c4c4"/>
<path d="M1087 349 H1112 M1114 396 H1087 V400 M1088 400 V557"/>
<path d="M1112 302.5 a5.5 5.8125 0 0 1 0 11.625 a5.5 5.8125 0 0 1 0 11.625 a5.5 5.8125 0 0 1 0 11.625 a5.5 5.8125 0 0 1 0 11.625 a5.5 5.8125 0 0 1 0 11.625 a5.5 5.8125 0 0 1 0 11.625 a5.5 5.8125 0 0 1 0 11.625 a5.5 5.8125 0 0 1 0 11.625"/>
<path d="M1114 292 V302 M1121 302 V396 M1124 292 V396 M1120 304 H1129"/>
<path d="M1134 326 a6 5.8125 0 0 0 0 11.625 a6 5.8125 0 0 0 0 11.625 a6 5.8125 0 0 0 0 11.625 a6 5.8125 0 0 0 0 11.625"/>
<path d="M1132 326 H1158 M1132 372.5 H1158"/>
<path d="M600 221 h3 M917 381 h3"/>
<path d="M677 677 l2 -2"/>
<path d="M424 653 V849 M427 653 V849"/>
<path d="M393 654 H417 M417 689.5 H396 M396 691 H392"/>
<path d="M417 654 a5 5.91667 0 0 1 0 11.8333 a5 5.91667 0 0 1 0 11.8333 a5 5.91667 0 0 1 0 11.8333"/>
<path d="M391 697 H416 M416 732.5 H407 M407 733.5 H391"/>
<path d="M416 697 a5 5.91667 0 0 1 0 11.8333 a5 5.91667 0 0 1 0 11.8333 a5 5.91667 0 0 1 0 11.8333"/>
<path d="M390 778 H415 M415 825 H390"/>
<path d="M415 778 a5 5.875 0 0 1 0 11.75 a5 5.875 0 0 1 0 11.75 a5 5.875 0 0 1 0 11.75 a5 5.875 0 0 1 0 11.75"/>
<path d="M437 672 a7.5 6.20833 0 0 0 0 12.4167 a7.5 6.20833 0 0 0 0 12.4167 a7.5 6.20833 0 0 0 0 12.4167 a7.5 6.20833 0 0 0 0 12.4167 a7.5 6.20833 0 0 0 0 12.4167 a7.5 6.20833 0 0 0 0 12.4167"/>
<path d="M437 755.5 a7.5 5.84375 0 0 0 0 11.6875 a7.5 5.84375 0 0 0 0 11.6875 a7.5 5.84375 0 0 0 0 11.6875 a7.5 5.84375 0 0 0 0 11.6875 a7.5 5.84375 0 0 0 0 11.6875 a7.5 5.84375 0 0 0 0 11.6875 a7.5 5.84375 0 0 0 0 11.6875 a7.5 5.84375 0 0 0 0 11.6875"/>
<path d="M433 672 H504 M504 673.5 H557 V620 H742 M742 619.5 H816"/>
<path d="M437 710 H466 M437 710.5 H594 M433 746.5 H461 M437 802 H461"/>
<path d="M433 755.5 H677 V714 H755 M755 708 V720"/>
<path d="M433 849 H508 M508 847.5 H731 V732 H755 M755 726.5 V738"/>
<circle cx="770" cy="723" r="25.6"/>
<path d="M785.5 712 V730 C785.5 736 788 739 791.5 741 M793 712.5 L788.5 723 L792 735"/>
<path d="M793 712.5 H815 M792 734.5 H815 V741.5 H791"/>
<circle cx="302.5" cy="788.5" r="2.5"/><circle cx="337.5" cy="777.5" r="2.5"/><circle cx="337.5" cy="800" r="2.5"/>
<path d="M305 788 L334 780.5 L337 776"/>
</g>
<g stroke="#b43232" shape-rendering="auto"><circle cx="710.5" cy="299" r="5"/><path d="M705.5 299 H715.5 M710.5 294 V304"/></g>
<g font-family="Liberation Sans,sans-serif" fill="#fff" stroke="#000" stroke-width="0.4" shape-rendering="auto" text-rendering="geometricPrecision">
<text x="692.5" y="282.5" font-size="18.5" textLength="17" lengthAdjust="spacingAndGlyphs">C1</text>
<text x="679.5" y="298" font-size="18.5" textLength="41" lengthAdjust="spacingAndGlyphs">.01uF</text>
<text x="279.5" y="774" font-size="18.5" textLength="52" lengthAdjust="spacingAndGlyphs">Power</text>
<text x="310.5" y="823" font-size="18.5" textLength="18" lengthAdjust="spacingAndGlyphs">S1</text>
</g>
</svg></div><div style="left:1594px;top:133px;width:1px;height:756px;background:#c9c6c1;"></div><div style="left:1595px;top:133px;width:1px;height:756px;background:#fbfaf9;"></div><div class="t" style="left:1342px;top:137px;">ライブラリブラウザ</div><div style="left:1567px;top:137px;width:11px;height:11px;border:1px solid #555;border-radius:2.5px;background:#f3f1ee;"></div><svg width="9" height="9" viewBox="0 0 9 9" style="left:1568px;top:138px"><rect x="3" y="1" width="4.5" height="4" fill="none" stroke="#333" stroke-width="1"/><rect x="1.2" y="3.5" width="4.5" height="4" fill="#f3f1ee" stroke="#333" stroke-width="1"/></svg><div style="left:1581px;top:137px;width:11px;height:11px;border:1px solid #555;border-radius:2.5px;background:#f3f1ee;"></div><svg width="9" height="9" viewBox="0 0 9 9" style="left:1582px;top:138px"><path d="M1.6 1.6 L7.4 7.4 M7.4 1.6 L1.6 7.4" stroke="#222" stroke-width="1.9"/></svg><div style="left:1488px;top:164px;width:68px;height:24px;background:linear-gradient(#e6e3df,#dedbd6);border:1px solid #b3b0aa;border-left:none;border-bottom:none;border-radius:0 3px 0 0;"></div><div style="left:1347px;top:161px;width:141px;height:28px;background:linear-gradient(#f7f6f4,#efebe7);border:1px solid #aeaba5;border-bottom:none;border-radius:4px 4px 0 0;"></div><div style="left:1348px;top:188px;width:237px;height:1px;background:#b3b0aa;left:1488px;width:97px;"></div><div style="left:1347px;top:188px;width:239px;height:485px;border:1px solid #b9b6b0;border-top:none;"></div><svg width="16.5" height="14" viewBox="0 0 19 16" style="left:1359px;top:166px"><defs><linearGradient id="of1" x1="0" y1="0" x2="0" y2="1"><stop offset="0" stop-color="#8fb6e8"/><stop offset="1" stop-color="#4f85cc"/></linearGradient></defs><path d="M1.5 1.5 H7 L8 3 H16.5 V13 H1.5Z" fill="#a2a2a0" stroke="#7e7e7c" stroke-width="0.6"/><path d="M3 3 H15.5 V9 H3Z" fill="#f6f6f4" stroke="#c4c4c2" stroke-width="0.5"/><path d="M0.8 6.5 H18.2 L16.8 15 H2.2Z" fill="url(#of1)" stroke="#4574b8" stroke-width="0.7"/></svg><div class="t" style="left:1379px;top:169px;">ファイルシステム</div><svg width="16" height="9" viewBox="0 0 16 9" style="left:1498px;top:171px"><circle cx="3.6" cy="5.4" r="3.2" fill="#666"/><circle cx="12.4" cy="5.4" r="3.2" fill="#666"/><path d="M3 2.5 C6 -0.5 10 -0.5 13 2.5 L11 5 H5Z" fill="#555"/><circle cx="3.4" cy="5.6" r="1.3" fill="#b4b4b2"/><circle cx="12.6" cy="5.6" r="1.3" fill="#b4b4b2"/></svg><div class="t" style="left:1519px;top:170px;">検索</div><div style="left:1555px;top:162px;width:15px;height:26px;background:linear-gradient(#f4f2ef,#e6e3df);border:1px solid #cfccc7;border-radius:3px 0 0 3px;"></div><div style="left:1569px;top:162px;width:16px;height:26px;background:linear-gradient(#fbfaf9,#e9e6e2);border:1px solid #b3b0aa;border-radius:0 3px 3px 0;"></div><svg width="5" height="9" viewBox="0 0 5 9" style="left:1560px;top:170px"><path d="M5 0 L0 4.5 L5 9Z" fill="#d2cfca"/></svg><svg width="6" height="10" viewBox="0 0 6 10" style="left:1574px;top:170px"><path d="M0 0 L6 5 L0 10Z" fill="#222"/></svg><div style="left:1349px;top:189px;width:234px;height:23px;background:linear-gradient(#fdfdfc,#f1efec 55%,#e6e3df);border:1px solid #b0ada7;border-radius:3px;"></div><svg width="16.5" height="14" viewBox="0 0 19 16" style="left:1355px;top:192.5px"><defs><linearGradient id="of2" x1="0" y1="0" x2="0" y2="1"><stop offset="0" stop-color="#8fb6e8"/><stop offset="1" stop-color="#4f85cc"/></linearGradient></defs><path d="M1.5 1.5 H7 L8 3 H16.5 V13 H1.5Z" fill="#a2a2a0" stroke="#7e7e7c" stroke-width="0.6"/><path d="M3 3 H15.5 V9 H3Z" fill="#f6f6f4" stroke="#c4c4c2" stroke-width="0.5"/><path d="M0.8 6.5 H18.2 L16.8 15 H2.2Z" fill="url(#of2)" stroke="#4574b8" stroke-width="0.7"/></svg><div class="t" style="left:1374px;top:194px;"><span class="l" style="margin-right:-13.20px">Electronics</span></div><svg width="9" height="5" viewBox="0 0 9 5" style="left:1567px;top:199px"><path d="M0 0 H9 L4.5 5Z" fill="#444"/></svg><div class="sunk" style="left:1349px;top:218px;width:234px;height:225px;"></div><div style="left:1350px;top:219px;width:218px;height:20px;background:linear-gradient(#fbfaf9,#edeae6);border-bottom:1px solid #b9b6b0;"></div><div class="t" style="left:1370px;top:222px;"><span class="l" style="margin-right:-4.80px">Name</span></div><div style="left:1350px;top:239px;width:218px;height:203px;overflow:hidden"><svg width="9" height="5" viewBox="0 0 9 5" style="left:5px;top:6.5px"><path d="M0 0 H9 L4.5 5Z" fill="#333"/></svg><svg width="15" height="14" viewBox="0 0 15 14" style="left:24px;top:2px"><defs><linearGradient id="tf0" x1="0" y1="0" x2="0" y2="1"><stop offset="0" stop-color="#9dbfe8"/><stop offset="1" stop-color="#5f93d2"/></linearGradient></defs><path d="M0.5 1.5 H6 L7 3 H14.5 V13.5 H0.5Z" fill="#a9b4c2" stroke="#8e9aaa" stroke-width="0.6"/><rect x="1" y="3.2" width="13.5" height="10.3" fill="url(#tf0)"/><path d="M1 13.5 H14.5" stroke="#4f7fba" stroke-width="0.8"/></svg><div class="t" style="left:45px;top:3px;"><span class="l" style="margin-right:-13.20px">Electronics</span></div><svg width="9" height="5" viewBox="0 0 9 5" style="left:25px;top:24.5px"><path d="M0 0 H9 L4.5 5Z" fill="#333"/></svg><svg width="15" height="14" viewBox="0 0 15 14" style="left:44px;top:20px"><defs><linearGradient id="tf1" x1="0" y1="0" x2="0" y2="1"><stop offset="0" stop-color="#9dbfe8"/><stop offset="1" stop-color="#5f93d2"/></linearGradient></defs><path d="M0.5 1.5 H6 L7 3 H14.5 V13.5 H0.5Z" fill="#a9b4c2" stroke="#8e9aaa" stroke-width="0.6"/><rect x="1" y="3.2" width="13.5" height="10.3" fill="url(#tf1)"/><path d="M1 13.5 H14.5" stroke="#4f7fba" stroke-width="0.8"/></svg><div class="t" style="left:65px;top:21px;"><span class="l" style="margin-right:-12.00px">capacitors</span></div><div style="left:0px;top:36px;width:218px;height:18px;background:#308cc6;"></div><svg width="9" height="5" viewBox="0 0 9 5" style="left:45px;top:42.5px"><path d="M0 0 H9 L4.5 5Z" fill="#111"/></svg><svg width="15" height="14" viewBox="0 0 15 14" style="left:64px;top:38px"><defs><linearGradient id="tf2" x1="0" y1="0" x2="0" y2="1"><stop offset="0" stop-color="#9dbfe8"/><stop offset="1" stop-color="#5f93d2"/></linearGradient></defs><path d="M0.5 1.5 H6 L7 3 H14.5 V13.5 H0.5Z" fill="#a9b4c2" stroke="#8e9aaa" stroke-width="0.6"/><rect x="1" y="3.2" width="13.5" height="10.3" fill="url(#tf2)"/><path d="M1 13.5 H14.5" stroke="#4f7fba" stroke-width="0.8"/></svg><div class="t" style="left:85px;top:39px;color:#fff;"><span class="l" style="margin-right:-6.00px">fixed</span></div><svg width="5" height="9" viewBox="0 0 5 9" style="left:47.5px;top:59px"><path d="M0 0 L5 4.5 L0 9Z" fill="#333"/></svg><svg width="15" height="14" viewBox="0 0 15 14" style="left:64px;top:56px"><defs><linearGradient id="tf3" x1="0" y1="0" x2="0" y2="1"><stop offset="0" stop-color="#9dbfe8"/><stop offset="1" stop-color="#5f93d2"/></linearGradient></defs><path d="M0.5 1.5 H6 L7 3 H14.5 V13.5 H0.5Z" fill="#a9b4c2" stroke="#8e9aaa" stroke-width="0.6"/><rect x="1" y="3.2" width="13.5" height="10.3" fill="url(#tf3)"/><path d="M1 13.5 H14.5" stroke="#4f7fba" stroke-width="0.8"/></svg><div class="t" style="left:85px;top:57px;"><span class="l" style="margin-right:-10.80px">polarized</span></div><svg width="5" height="9" viewBox="0 0 5 9" style="left:47.5px;top:77px"><path d="M0 0 L5 4.5 L0 9Z" fill="#333"/></svg><svg width="15" height="14" viewBox="0 0 15 14" style="left:64px;top:74px"><defs><linearGradient id="tf4" x1="0" y1="0" x2="0" y2="1"><stop offset="0" stop-color="#9dbfe8"/><stop offset="1" stop-color="#5f93d2"/></linearGradient></defs><path d="M0.5 1.5 H6 L7 3 H14.5 V13.5 H0.5Z" fill="#a9b4c2" stroke="#8e9aaa" stroke-width="0.6"/><rect x="1" y="3.2" width="13.5" height="10.3" fill="url(#tf4)"/><path d="M1 13.5 H14.5" stroke="#4f7fba" stroke-width="0.8"/></svg><div class="t" style="left:85px;top:75px;"><span class="l" style="margin-right:-9.60px">variable</span></div><svg width="5" height="9" viewBox="0 0 5 9" style="left:27.5px;top:95px"><path d="M0 0 L5 4.5 L0 9Z" fill="#333"/></svg><svg width="15" height="14" viewBox="0 0 15 14" style="left:44px;top:92px"><defs><linearGradient id="tf5" x1="0" y1="0" x2="0" y2="1"><stop offset="0" stop-color="#9dbfe8"/><stop offset="1" stop-color="#5f93d2"/></linearGradient></defs><path d="M0.5 1.5 H6 L7 3 H14.5 V13.5 H0.5Z" fill="#a9b4c2" stroke="#8e9aaa" stroke-width="0.6"/><rect x="1" y="3.2" width="13.5" height="10.3" fill="url(#tf5)"/><path d="M1 13.5 H14.5" stroke="#4f7fba" stroke-width="0.8"/></svg><div class="t" style="left:65px;top:93px;"><span class="l" style="margin-right:-12.00px">connectors</span></div><svg width="5" height="9" viewBox="0 0 5 9" style="left:27.5px;top:113px"><path d="M0 0 L5 4.5 L0 9Z" fill="#333"/></svg><svg width="15" height="14" viewBox="0 0 15 14" style="left:44px;top:110px"><defs><linearGradient id="tf6" x1="0" y1="0" x2="0" y2="1"><stop offset="0" stop-color="#9dbfe8"/><stop offset="1" stop-color="#5f93d2"/></linearGradient></defs><path d="M0.5 1.5 H6 L7 3 H14.5 V13.5 H0.5Z" fill="#a9b4c2" stroke="#8e9aaa" stroke-width="0.6"/><rect x="1" y="3.2" width="13.5" height="10.3" fill="url(#tf6)"/><path d="M1 13.5 H14.5" stroke="#4f7fba" stroke-width="0.8"/></svg><div class="t" style="left:65px;top:111px;"><span class="l" style="margin-right:-7.20px">diodes</span></div><svg width="5" height="9" viewBox="0 0 5 9" style="left:27.5px;top:131px"><path d="M0 0 L5 4.5 L0 9Z" fill="#333"/></svg><svg width="15" height="14" viewBox="0 0 15 14" style="left:44px;top:128px"><defs><linearGradient id="tf7" x1="0" y1="0" x2="0" y2="1"><stop offset="0" stop-color="#9dbfe8"/><stop offset="1" stop-color="#5f93d2"/></linearGradient></defs><path d="M0.5 1.5 H6 L7 3 H14.5 V13.5 H0.5Z" fill="#a9b4c2" stroke="#8e9aaa" stroke-width="0.6"/><rect x="1" y="3.2" width="13.5" height="10.3" fill="url(#tf7)"/><path d="M1 13.5 H14.5" stroke="#4f7fba" stroke-width="0.8"/></svg><div class="t" style="left:65px;top:129px;"><span class="l" style="margin-right:-13.20px">Electronic1</span></div><svg width="5" height="9" viewBox="0 0 5 9" style="left:27.5px;top:149px"><path d="M0 0 L5 4.5 L0 9Z" fill="#333"/></svg><svg width="15" height="14" viewBox="0 0 15 14" style="left:44px;top:146px"><defs><linearGradient id="tf8" x1="0" y1="0" x2="0" y2="1"><stop offset="0" stop-color="#9dbfe8"/><stop offset="1" stop-color="#5f93d2"/></linearGradient></defs><path d="M0.5 1.5 H6 L7 3 H14.5 V13.5 H0.5Z" fill="#a9b4c2" stroke="#8e9aaa" stroke-width="0.6"/><rect x="1" y="3.2" width="13.5" height="10.3" fill="url(#tf8)"/><path d="M1 13.5 H14.5" stroke="#4f7fba" stroke-width="0.8"/></svg><div class="t" style="left:65px;top:147px;"><span class="l" style="margin-right:-12.00px">ICs-Analog</span></div><svg width="5" height="9" viewBox="0 0 5 9" style="left:27.5px;top:167px"><path d="M0 0 L5 4.5 L0 9Z" fill="#333"/></svg><svg width="15" height="14" viewBox="0 0 15 14" style="left:44px;top:164px"><defs><linearGradient id="tf9" x1="0" y1="0" x2="0" y2="1"><stop offset="0" stop-color="#9dbfe8"/><stop offset="1" stop-color="#5f93d2"/></linearGradient></defs><path d="M0.5 1.5 H6 L7 3 H14.5 V13.5 H0.5Z" fill="#a9b4c2" stroke="#8e9aaa" stroke-width="0.6"/><rect x="1" y="3.2" width="13.5" height="10.3" fill="url(#tf9)"/><path d="M1 13.5 H14.5" stroke="#4f7fba" stroke-width="0.8"/></svg><div class="t" style="left:65px;top:165px;"><span class="l" style="margin-right:-13.20px">ICs-Digital</span></div><svg width="5" height="9" viewBox="0 0 5 9" style="left:27.5px;top:185px"><path d="M0 0 L5 4.5 L0 9Z" fill="#333"/></svg><svg width="15" height="14" viewBox="0 0 15 14" style="left:44px;top:182px"><defs><linearGradient id="tf10" x1="0" y1="0" x2="0" y2="1"><stop offset="0" stop-color="#9dbfe8"/><stop offset="1" stop-color="#5f93d2"/></linearGradient></defs><path d="M0.5 1.5 H6 L7 3 H14.5 V13.5 H0.5Z" fill="#a9b4c2" stroke="#8e9aaa" stroke-width="0.6"/><rect x="1" y="3.2" width="13.5" height="10.3" fill="url(#tf10)"/><path d="M1 13.5 H14.5" stroke="#4f7fba" stroke-width="0.8"/></svg><div class="t" style="left:65px;top:183px;"><span class="l" style="margin-right:-13.20px">ICs-Optical</span></div><svg width="5" height="9" viewBox="0 0 5 9" style="left:27.5px;top:203px"><path d="M0 0 L5 4.5 L0 9Z" fill="#333"/></svg><svg width="15" height="14" viewBox="0 0 15 14" style="left:44px;top:200px"><defs><linearGradient id="tf11" x1="0" y1="0" x2="0" y2="1"><stop offset="0" stop-color="#9dbfe8"/><stop offset="1" stop-color="#5f93d2"/></linearGradient></defs><path d="M0.5 1.5 H6 L7 3 H14.5 V13.5 H0.5Z" fill="#a9b4c2" stroke="#8e9aaa" stroke-width="0.6"/><rect x="1" y="3.2" width="13.5" height="10.3" fill="url(#tf11)"/><path d="M1 13.5 H14.5" stroke="#4f7fba" stroke-width="0.8"/></svg></div><div style="left:1568px;top:219px;width:14px;height:223px;background:#e2e0dc;border-left:1px solid #d0cdc8;"></div><div style="left:1568px;top:232px;width:14px;height:94px;background:linear-gradient(90deg,#f6f5f3,#eeece9);border:1px solid #cdcac5;"></div><div style="left:1568px;top:219px;width:14px;height:13px;background:#f7f6f4;border-bottom:1px solid #d0cdc8;border-left:1px solid #d0cdc8;"></div><div style="left:1568px;top:429px;width:14px;height:13px;background:#f7f6f4;border-left:1px solid #d0cdc8;"></div><svg width="8" height="5" viewBox="0 0 8 5" style="left:1571px;top:223px"><path d="M0 5 L4 0 L8 5Z" fill="#4a4a4a"/></svg><svg width="8" height="5" viewBox="0 0 8 5" style="left:1571px;top:433px"><path d="M0 0 L4 5 L8 0Z" fill="#4a4a4a"/></svg><div style="left:1458px;top:444px;width:18px;height:3px;background-image:radial-gradient(circle at 1px 1px,#cfcbc5 0.6px,transparent 1px);background-size:3px 3px;"></div><div class="sunk" style="left:1349px;top:447px;width:234px;height:225px;"></div><svg width="48" height="48" viewBox="0 0 48 48" style="left:1362px;top:449px"><g stroke="#222" stroke-width="1" fill="none"><path d="M1.5 16.5 H23 M26 16.5 H46.5 M22.5 11 V22 M28.5 11 C25 14 25 19 28.5 22"/><text x="24.5" y="30.5" text-anchor="middle" font-family="Liberation Sans,sans-serif" font-size="8.5" font-weight="bold" fill="#111" stroke="none">C1</text><text x="24.5" y="37.8" text-anchor="middle" font-family="Liberation Sans,sans-serif" font-size="8.5" font-weight="bold" fill="#111" stroke="none" textLength="20.5" lengthAdjust="spacingAndGlyphs">,01uF</text></g></svg><div class="t" style="left:1362px;top:500px;"><span class="l" style="margin-right:-9.60px">cap1_htb</span></div><svg width="48" height="48" viewBox="0 0 48 48" style="left:1434px;top:449px"><g stroke="#222" stroke-width="1" fill="none"><path d="M1.5 32.5 H23 M26 32.5 H46.5 M22.5 27 V38 M28.5 27 C25 30 25 35 28.5 38"/><text x="24.5" y="15.8" text-anchor="middle" font-family="Liberation Sans,sans-serif" font-size="8.5" font-weight="bold" fill="#111" stroke="none">C1</text><text x="24.5" y="23.1" text-anchor="middle" font-family="Liberation Sans,sans-serif" font-size="8.5" font-weight="bold" fill="#111" stroke="none" textLength="20.5" lengthAdjust="spacingAndGlyphs">,01uF</text></g></svg><div class="t" style="left:1434px;top:500px;"><span class="l" style="margin-right:-9.60px">cap1_htt</span></div><svg width="48" height="48" viewBox="0 0 48 48" style="left:1506px;top:449px"><g stroke="#222" stroke-width="1" fill="none"><path d="M35.5 1.5 V22 M35.5 25 V46 M30 22.5 H41 M30 28 C33 24.5 38 24.5 41 28"/><text x="27" y="22.4" text-anchor="end" font-family="Liberation Sans,sans-serif" font-size="8.5" font-weight="bold" fill="#111" stroke="none">C1</text><text x="27" y="29.7" text-anchor="end" font-family="Liberation Sans,sans-serif" font-size="8.5" font-weight="bold" fill="#111" stroke="none" textLength="20.5" lengthAdjust="spacingAndGlyphs">,01uF</text></g></svg><div class="t" style="left:1506px;top:500px;"><span class="l" style="margin-right:-9.60px">cap1_vtl</span></div><svg width="48" height="48" viewBox="0 0 48 48" style="left:1362px;top:521px"><g stroke="#222" stroke-width="1" fill="none"><path d="M12.5 1.5 V22 M12.5 25 V46 M7 22.5 H18 M7 28 C10 24.5 15 24.5 18 28"/><text x="21" y="23" text-anchor="start" font-family="Liberation Sans,sans-serif" font-size="8.5" font-weight="bold" fill="#111" stroke="none">C1</text><text x="21" y="30.3" text-anchor="start" font-family="Liberation Sans,sans-serif" font-size="8.5" font-weight="bold" fill="#111" stroke="none" textLength="20.5" lengthAdjust="spacingAndGlyphs">,01uF</text></g></svg><div class="t" style="left:1362px;top:572px;"><span class="l" style="margin-right:-9.60px">cap1_vtr</span></div><div style="left:1434px;top:521px;width:48px;height:48px;background:#bfd9ec;"></div><div style="left:1431px;top:572px;width:54px;height:14px;background:#308cc6;"></div><svg width="48" height="48" viewBox="0 0 48 48" style="left:1434px;top:521px"><g stroke="#222" stroke-width="1" fill="none"><path d="M1.5 16.5 H21.5 M26.5 16.5 H46.5 M21.5 10.5 V22.5 M26.5 10.5 V22.5"/><text x="24.5" y="30.5" text-anchor="middle" font-family="Liberation Sans,sans-serif" font-size="8.5" font-weight="bold" fill="#111" stroke="none">C1</text><text x="24.5" y="37.8" text-anchor="middle" font-family="Liberation Sans,sans-serif" font-size="8.5" font-weight="bold" fill="#111" stroke="none" textLength="20.5" lengthAdjust="spacingAndGlyphs">,01uF</text></g></svg><div class="t" style="left:1434px;top:572px;color:#fff;"><span class="l" style="margin-right:-9.60px">cap2_htb</span></div><svg width="48" height="48" viewBox="0 0 48 48" style="left:1506px;top:521px"><g stroke="#222" stroke-width="1" fill="none"><path d="M1.5 32.5 H21.5 M26.5 32.5 H46.5 M21.5 26.5 V38.5 M26.5 26.5 V38.5"/><text x="24.5" y="15.8" text-anchor="middle" font-family="Liberation Sans,sans-serif" font-size="8.5" font-weight="bold" fill="#111" stroke="none">C1</text><text x="24.5" y="23.1" text-anchor="middle" font-family="Liberation Sans,sans-serif" font-size="8.5" font-weight="bold" fill="#111" stroke="none" textLength="20.5" lengthAdjust="spacingAndGlyphs">,01uF</text></g></svg><div class="t" style="left:1506px;top:572px;"><span class="l" style="margin-right:-9.60px">cap2_htt</span></div><svg width="48" height="48" viewBox="0 0 48 48" style="left:1362px;top:593px"><g stroke="#222" stroke-width="1" fill="none"><path d="M35.5 1.5 V22 M35.5 26 V46 M30 22.5 H41.5 M30 26.5 H41.5"/><text x="27" y="23.2" text-anchor="end" font-family="Liberation Sans,sans-serif" font-size="8.5" font-weight="bold" fill="#111" stroke="none">C1</text><text x="27" y="30.5" text-anchor="end" font-family="Liberation Sans,sans-serif" font-size="8.5" font-weight="bold" fill="#111" stroke="none" textLength="20.5" lengthAdjust="spacingAndGlyphs">,01uF</text></g></svg><div class="t" style="left:1362px;top:644px;"><span class="l" style="margin-right:-9.60px">cap2_vtl</span></div><svg width="48" height="48" viewBox="0 0 48 48" style="left:1434px;top:593px"><g stroke="#222" stroke-width="1" fill="none"><path d="M12.5 1.5 V22 M12.5 26 V46 M7 22.5 H18.5 M7 26.5 H18.5"/><text x="21" y="23.2" text-anchor="start" font-family="Liberation Sans,sans-serif" font-size="8.5" font-weight="bold" fill="#111" stroke="none">C1</text><text x="21" y="30.5" text-anchor="start" font-family="Liberation Sans,sans-serif" font-size="8.5" font-weight="bold" fill="#111" stroke="none" textLength="20.5" lengthAdjust="spacingAndGlyphs">,01uF</text></g></svg><div class="t" style="left:1434px;top:644px;"><span class="l" style="margin-right:-9.60px">cap2_vtr</span></div><div class="btn" style="left:1347px;top:678px;width:103px;height:23px;"></div><div class="btn" style="left:1454px;top:678px;width:103px;height:23px;"></div><div class="btn" style="left:1561px;top:678px;width:24px;height:23px;"></div><svg width="21" height="21" viewBox="0 0 24 24" style="left:1387px;top:679px;"><path d="M7 4.5 C14 3.5 15.5 7 14.8 13 H18 L12.5 20.5 L7.5 13 H10.8 C11.3 9 10.5 7.5 7 7.5Z" fill="#3a62e0" stroke="#1c3cb8" stroke-width="0.7"/></svg><svg width="21" height="21" viewBox="0 0 24 24" style="left:1494px;top:679px;"><path d="M7 8.5 L11.5 2 L16.5 8.5 H13.4 V16 C13.4 18 15 18.6 19 18 V20.6 C12.5 22 9.8 20.5 9.8 16 V8.5Z" fill="#a4a4a2" stroke="#8a8a88" stroke-width="0.6"/></svg><svg width="21" height="21" viewBox="0 0 24 24" style="left:1562px;top:679px;"><rect x="5" y="12" width="9" height="9" fill="#c2c2c0" stroke="#8e8e8c" stroke-width="0.7"/><path d="M5 15 H14 M5 18 H14" stroke="#8e8e8c" stroke-width="0.7"/><path d="M11 9.5 A4.6 4.6 0 1 1 16.5 13.5" fill="none" stroke="#7a9ad8" stroke-width="2"/><path d="M9 6.5 L12.5 10.5 L8 11Z" fill="#7a9ad8"/></svg><div style="left:1458px;top:710px;width:18px;height:3px;background-image:radial-gradient(circle at 1px 1px,#cfcbc5 0.6px,transparent 1px);background-size:3px 3px;"></div><div class="t" style="left:1342px;top:720px;">ブロックリスト</div><div style="left:1567px;top:720px;width:11px;height:11px;border:1px solid #555;border-radius:2.5px;background:#f3f1ee;"></div><svg width="9" height="9" viewBox="0 0 9 9" style="left:1568px;top:721px"><rect x="3" y="1" width="4.5" height="4" fill="none" stroke="#333" stroke-width="1"/><rect x="1.2" y="3.5" width="4.5" height="4" fill="#f3f1ee" stroke="#333" stroke-width="1"/></svg><div style="left:1581px;top:720px;width:11px;height:11px;border:1px solid #555;border-radius:2.5px;background:#f3f1ee;"></div><svg width="9" height="9" viewBox="0 0 9 9" style="left:1582px;top:721px"><path d="M1.6 1.6 L7.4 7.4 M7.4 1.6 L1.6 7.4" stroke="#222" stroke-width="1.9"/></svg><div class="btn" style="left:1339px;top:736px;width:31px;height:21px;"></div><svg width="18" height="18" viewBox="0 0 24 24" style="left:1345.5px;top:737.5px;"><path d="M0.5 12.5 C4 4.5 17 3 23.5 11 C19.5 19.5 6.5 20.5 0.5 12.5Z" fill="#000"/><path d="M5 12.2 C8 8.6 15.5 8 19.5 11.2 C16.5 15.2 8.5 15.6 5 12.2Z" fill="#fff"/><circle cx="12.2" cy="11.4" r="4.2" fill="#000"/><circle cx="10.8" cy="10" r="1.2" fill="#fff"/><path d="M2 15 C6 19.5 15 20 21 15.5" stroke="#000" stroke-width="1.2" fill="none"/></svg><div class="btn" style="left:1371px;top:736px;width:31px;height:21px;"></div><svg width="18" height="18" viewBox="0 0 24 24" style="left:1377.5px;top:737.5px;"><path d="M0.5 12.5 C4 4.5 17 3 23.5 11 C19.5 19.5 6.5 20.5 0.5 12.5Z" fill="#b0b0ae"/><path d="M5 12.2 C8 8.6 15.5 8 19.5 11.2 C16.5 15.2 8.5 15.6 5 12.2Z" fill="#fff"/><circle cx="12.2" cy="11.4" r="4.2" fill="#b0b0ae"/><circle cx="10.8" cy="10" r="1.2" fill="#fff"/><path d="M2 15 C6 19.5 15 20 21 15.5" stroke="#b0b0ae" stroke-width="1.2" fill="none"/></svg><div class="btn" style="left:1403px;top:736px;width:31px;height:21px;"></div><svg width="18" height="18" viewBox="0 0 24 24" style="left:1409.5px;top:737.5px;"><path d="M9.5 3 H14.5 V9.5 H21 V14.5 H14.5 V21 H9.5 V14.5 H3 V9.5 H9.5Z" fill="#e01818" stroke="#a80c0c" stroke-width="0.8"/></svg><div class="btn" style="left:1435px;top:736px;width:31px;height:21px;"></div><svg width="18" height="18" viewBox="0 0 24 24" style="left:1441.5px;top:737.5px;"><rect x="3.5" y="10" width="17" height="4" rx="1" fill="#a4a4a2" stroke="#8e8e8c" stroke-width="0.6"/></svg><div class="btn" style="left:1467px;top:736px;width:31px;height:21px;"></div><svg width="18" height="18" viewBox="0 0 24 24" style="left:1473.5px;top:737.5px;"><text x="0.5" y="18.5" font-family="Liberation Sans,sans-serif" font-size="15" fill="#666">a</text><path d="M11.5 3 V21" stroke="#666" stroke-width="1"/><text x="14" y="18.5" font-family="Liberation Sans,sans-serif" font-size="15" fill="#666">b</text></svg><div class="btn" style="left:1499px;top:736px;width:31px;height:21px;"></div><svg width="18" height="18" viewBox="0 0 24 24" style="left:1505.5px;top:737.5px;"><path d="M18 2.5 L21.5 6 L9 18.5 L5.5 15Z" fill="#e0a23c" stroke="#9a6a1a" stroke-width="0.8"/><path d="M18 2.5 L21.5 6 L20 7.5 L16.5 4Z" fill="#e2463a"/><path d="M5.5 15 L9 18.5 L3.5 20.5Z" fill="#f2deb8" stroke="#9a7a4a" stroke-width="0.5"/><path d="M3.5 20.5 L4.4 18 L6 19.6Z" fill="#333"/><path d="M17 5.2 L7.2 15" stroke="#f6d48a" stroke-width="1"/></svg><div class="btn" style="left:1531px;top:736px;width:31px;height:21px;"></div><svg width="18" height="18" viewBox="0 0 24 24" style="left:1537.5px;top:737.5px;"><rect x="4" y="2" width="16" height="20" fill="#e8e8e6" stroke="#d0d0ce" stroke-width="0.8"/><path d="M7 4.5 C14 3.5 15.5 7 14.8 13 H18 L12.5 20.5 L7.5 13 H10.8 C11.3 9 10.5 7.5 7 7.5Z" fill="#a9a9a7" stroke="#8e8e8c" stroke-width="0.6"/></svg><div class="btn" style="left:1563px;top:736px;width:31px;height:21px;"></div><svg width="18" height="18" viewBox="0 0 24 24" style="left:1569.5px;top:737.5px;"><rect x="3.5" y="3.5" width="17" height="17" rx="2.5" fill="#e8826c" stroke="#dc6a52" stroke-width="1"/><path d="M8.5 8.5 L15.5 15.5 M15.5 8.5 L8.5 15.5" stroke="#fff" stroke-width="2.6"/></svg><div class="sunk" style="left:1339px;top:758px;width:255px;height:80px;"></div><div style="left:1340px;top:759px;width:239px;height:78px;overflow:hidden"><svg width="17" height="12" viewBox="0 0 24 17" style="left:1px;top:3px"><path d="M1 9 C5 1 17 0 23.5 7.5 C19 15.5 7 16.5 1 9Z" fill="#000"/><path d="M5 8.8 C8.5 5 16 4.6 19.5 7.8 C16 11.8 9 12.2 5 8.8Z" fill="#fff"/><circle cx="12.4" cy="8" r="4.8" fill="#000"/><circle cx="10.8" cy="6.4" r="1.3" fill="#fff"/><path d="M2 12 C7 17 15 17.5 21.5 12.5" stroke="#000" stroke-width="1.8" fill="none"/></svg><svg width="15" height="15" viewBox="0 0 24 24" style="left:23px;top:2px;"><path d="M18 2.5 L21.5 6 L9 18.5 L5.5 15Z" fill="#e0a23c" stroke="#9a6a1a" stroke-width="0.8"/><path d="M18 2.5 L21.5 6 L20 7.5 L16.5 4Z" fill="#e2463a"/><path d="M5.5 15 L9 18.5 L3.5 20.5Z" fill="#f2deb8" stroke="#9a7a4a" stroke-width="0.5"/><path d="M3.5 20.5 L4.4 18 L6 19.6Z" fill="#333"/><path d="M17 5.2 L7.2 15" stroke="#f6d48a" stroke-width="1"/></svg><div class="t" style="left:46px;top:3px"><span class="l" style="margin-right:-14.40px">*Model_Space</span></div><svg width="17" height="12" viewBox="0 0 24 17" style="left:1px;top:21px"><path d="M1 9 C5 1 17 0 23.5 7.5 C19 15.5 7 16.5 1 9Z" fill="#000"/><path d="M5 8.8 C8.5 5 16 4.6 19.5 7.8 C16 11.8 9 12.2 5 8.8Z" fill="#fff"/><circle cx="12.4" cy="8" r="4.8" fill="#000"/><circle cx="10.8" cy="6.4" r="1.3" fill="#fff"/><path d="M2 12 C7 17 15 17.5 21.5 12.5" stroke="#000" stroke-width="1.8" fill="none"/></svg><div class="t" style="left:46px;top:21px"><span class="l" style="margin-right:-9.60px">cap2_htb</span></div><svg width="17" height="12" viewBox="0 0 24 17" style="left:1px;top:39px"><path d="M1 9 C5 1 17 0 23.5 7.5 C19 15.5 7 16.5 1 9Z" fill="#000"/><path d="M5 8.8 C8.5 5 16 4.6 19.5 7.8 C16 11.8 9 12.2 5 8.8Z" fill="#fff"/><circle cx="12.4" cy="8" r="4.8" fill="#000"/><circle cx="10.8" cy="6.4" r="1.3" fill="#fff"/><path d="M2 12 C7 17 15 17.5 21.5 12.5" stroke="#000" stroke-width="1.8" fill="none"/></svg><div class="t" style="left:46px;top:39px"><span class="l" style="margin-right:-6.00px">earth</span></div><svg width="17" height="12" viewBox="0 0 24 17" style="left:1px;top:57px"><path d="M1 9 C5 1 17 0 23.5 7.5 C19 15.5 7 16.5 1 9Z" fill="#000"/><path d="M5 8.8 C8.5 5 16 4.6 19.5 7.8 C16 11.8 9 12.2 5 8.8Z" fill="#fff"/><circle cx="12.4" cy="8" r="4.8" fill="#000"/><circle cx="10.8" cy="6.4" r="1.3" fill="#fff"/><path d="M2 12 C7 17 15 17.5 21.5 12.5" stroke="#000" stroke-width="1.8" fill="none"/></svg><div class="t" style="left:46px;top:57px"><span class="l" style="margin-right:-4.80px">evd4</span></div><svg width="17" height="12" viewBox="0 0 24 17" style="left:1px;top:75px"><path d="M1 9 C5 1 17 0 23.5 7.5 C19 15.5 7 16.5 1 9Z" fill="#000"/><path d="M5 8.8 C8.5 5 16 4.6 19.5 7.8 C16 11.8 9 12.2 5 8.8Z" fill="#fff"/><circle cx="12.4" cy="8" r="4.8" fill="#000"/><circle cx="10.8" cy="6.4" r="1.3" fill="#fff"/><path d="M2 12 C7 17 15 17.5 21.5 12.5" stroke="#000" stroke-width="1.8" fill="none"/></svg></div><div style="left:1579px;top:759px;width:14px;height:78px;background:#f7f6f4;border-left:1px solid #d0cdc8;"></div><div style="left:1579px;top:800px;width:14px;height:23px;background:#dddbd7;border-left:1px solid #d0cdc8;"></div><div style="left:1579px;top:772px;width:14px;height:28px;background:linear-gradient(90deg,#f9f8f6,#f1efec);border:1px solid #d2cfca;"></div><svg width="8" height="5" viewBox="0 0 8 5" style="left:1582px;top:763px"><path d="M0 5 L4 0 L8 5Z" fill="#4a4a4a"/></svg><svg width="8" height="5" viewBox="0 0 8 5" style="left:1582px;top:827px"><path d="M0 0 L4 5 L8 0Z" fill="#4a4a4a"/></svg><div style="left:1458px;top:839px;width:18px;height:3px;background-image:radial-gradient(circle at 1px 1px,#cfcbc5 0.6px,transparent 1px);background-size:3px 3px;"></div><div class="sunk" style="left:1339px;top:843px;width:255px;height:20px;"></div><div style="left:1579px;top:844px;width:14px;height:18px;background:#f7f6f4;border-left:1px solid #d0cdc8;"></div><svg width="8" height="4" viewBox="0 0 8 4" style="left:1582px;top:847px"><path d="M0 4 L4 0 L8 4Z" fill="#4a4a4a"/></svg><svg width="8" height="4" viewBox="0 0 8 4" style="left:1582px;top:856px"><path d="M0 0 L4 4 L8 0Z" fill="#4a4a4a"/></svg><div class="sunk" style="left:1339px;top:862px;width:255px;height:27px;"></div><div class="t" style="left:1341px;top:870px;"><span class="l" style="margin-right:-1.20px">&gt;</span></div><div class="btn" style="left:1569px;top:866px;width:23px;height:21px;"></div><div style="left:1574px;top:870px;width:14px;height:11px;border:1px solid #222;border-top:3px solid #111;background:#fff;"></div><div style="left:1606px;top:138px;width:14px;height:4px;background-image:radial-gradient(circle at 1px 1px,#d2cec8 0.6px,transparent 1px);background-size:3px 2px;"></div><div style="left:1598px;top:177px;width:29px;height:28px;background:linear-gradient(135deg,#8e8e8e,#c4c4c3 50%,#e6e5e3);border:1px solid #77756f;"></div><div style="left:1598px;top:244px;width:29px;height:28px;background:linear-gradient(135deg,#8e8e8e,#c4c4c3 50%,#e6e5e3);border:1px solid #77756f;"></div><div style="left:1601px;top:149px;width:22px;height:22px;background:#fdfdfc;border:1px solid #b9b6b0;border-top:4px solid #111;"></div><div style="left:1602px;top:150px;width:2px;height:2px;background:#fff;"></div><svg width="20" height="17" viewBox="0 0 20 17" style="left:1602px;top:153px"><path d="M6 6 L13 3 V11 L6 14Z" fill="#e4a0a0" stroke="#888" stroke-width="0.6"/><path d="M4 7 L9 5 V12 L4 14Z" fill="#a9a9a9" stroke="#777" stroke-width="0.5"/></svg><div style="left:1602px;top:180px;width:22px;height:22px;background:#fdfdfc;border:1px solid #b9b6b0;border-top:4px solid #111;"></div><div style="left:1603px;top:181px;width:2px;height:2px;background:#fff;"></div><svg width="20" height="17" viewBox="0 0 20 17" style="left:1603px;top:184px"><rect x="4.5" y="3.5" width="8" height="6" fill="#fbf6d0" stroke="#8a7a3a" stroke-width="0.8"/><circle cx="12" cy="9.5" r="3.6" fill="#f6eaa8" fill-opacity="0.7" stroke="#8a7a3a" stroke-width="0.8"/></svg><div style="left:1602px;top:210px;width:22px;height:1px;background:#d2cfca;"></div><div style="left:1601px;top:216px;width:22px;height:22px;background:#fdfdfc;border:1px solid #b9b6b0;border-top:4px solid #111;"></div><div style="left:1602px;top:217px;width:2px;height:2px;background:#fff;"></div><svg width="20" height="17" viewBox="0 0 20 17" style="left:1602px;top:220px"><rect x="2" y="2" width="3" height="3" fill="#111"/><rect x="2" y="7" width="3" height="3" fill="#111"/><rect x="2" y="12" width="3" height="3" fill="#111"/><rect x="7" y="2" width="10" height="3" fill="#e4e4e2" stroke="#999" stroke-width="0.5"/><rect x="7" y="7" width="10" height="3" fill="#e4e4e2" stroke="#999" stroke-width="0.5"/><rect x="7" y="12" width="10" height="3" fill="#e4e4e2" stroke="#999" stroke-width="0.5"/></svg><div style="left:1602px;top:247px;width:22px;height:22px;background:#fdfdfc;border:1px solid #b9b6b0;border-top:4px solid #111;"></div><div style="left:1603px;top:248px;width:2px;height:2px;background:#fff;"></div><svg width="20" height="17" viewBox="0 0 20 17" style="left:1603px;top:251px"><path d="M4 3 V14" stroke="#555" stroke-width="1"/><rect x="6" y="5" width="9" height="7" fill="#b4b4b2" stroke="#666" stroke-width="0.7"/><rect x="8" y="7" width="5" height="3" fill="#555"/></svg><div style="left:1602px;top:277px;width:22px;height:1px;background:#d2cfca;"></div><div style="left:1601px;top:283px;width:22px;height:22px;background:#fdfdfc;border:1px solid #b9b6b0;border-top:4px solid #111;"></div><div style="left:1602px;top:284px;width:2px;height:2px;background:#fff;"></div><svg width="20" height="17" viewBox="0 0 20 17" style="left:1602px;top:287px"><path d="M2 3 H16 M2 5.5 H13 M2 8 H15 M2 10.5 H12" stroke="#aaa" stroke-width="0.8"/><path d="M2 14 H4 M6 14 H17" stroke="#666" stroke-width="1"/></svg><div style="left:7px;top:889px;width:1626px;height:47px;background:#efebe7;border-top:1px solid #e6e3df;"></div><div class="t" style="left:12px;top:896px;"><span class="l" style="margin-right:-18.00px">120.9052,92.435</span></div><div class="t" style="left:12px;top:916px;"><span class="l" style="margin-right:-20.40px">@36.1063,-60.4506</span></div><div style="left:282px;top:895px;width:1px;height:36px;background:#8e8c88;"></div><div style="left:283px;top:895px;width:1px;height:36px;background:#fbfaf9;"></div><div class="t" style="left:287px;top:896px;"><span class="l" style="margin-right:-14.40px">152.1916&lt;37°</span></div><div class="t" style="left:287px;top:916px;"><span class="l" style="margin-right:-15.60px">@70.4126&lt;301°</span></div><div style="left:557px;top:897px;width:1px;height:32px;background-image:linear-gradient(#b9b6b0 1px,transparent 1px);background-size:1px 3px;"></div><div style="left:1024px;top:897px;width:1px;height:32px;background-image:linear-gradient(#b9b6b0 1px,transparent 1px);background-size:1px 3px;"></div><div class="t" style="left:599px;top:907px;">エンティティまたは領域を選択</div><div class="t" style="left:1028px;top:907px;">エンティティが選択されていません。</div><svg width="30" height="34" viewBox="0 0 30 34" style="left:775px;top:894px"><defs><radialGradient id="gms" cx="0.4" cy="0.35" r="0.8"><stop offset="0" stop-color="#ffffff"/><stop offset="0.7" stop-color="#eeeeec"/><stop offset="1" stop-color="#c2c2c0"/></radialGradient></defs><path d="M5 7 C9 3 17 3 20 8 L27 21 C29.5 28 24 32 17 32 C9 32 4 28 3 19 C2 13 2.5 10 5 7 Z" fill="url(#gms)" stroke="#a2a2a0" stroke-width="0.8"/><path d="M9.5 4 L8 1.5" stroke="#444" stroke-width="1" fill="none"/><ellipse cx="12.6" cy="11" rx="4.6" ry="5" fill="#dfe3df" opacity="0.8"/><ellipse cx="12.8" cy="11.2" rx="1.9" ry="3.4" fill="#4a5cd0" transform="rotate(-18 12.8 11.2)"/></svg><div style="left:1619px;top:922px;width:12px;height:12px;background-image:radial-gradient(circle at 1px 1px,#c4c0b9 0.7px,transparent 1px);background-size:3px 3px;clip-path:polygon(100% 0,100% 100%,0 100%);"></div>
</body></html>
